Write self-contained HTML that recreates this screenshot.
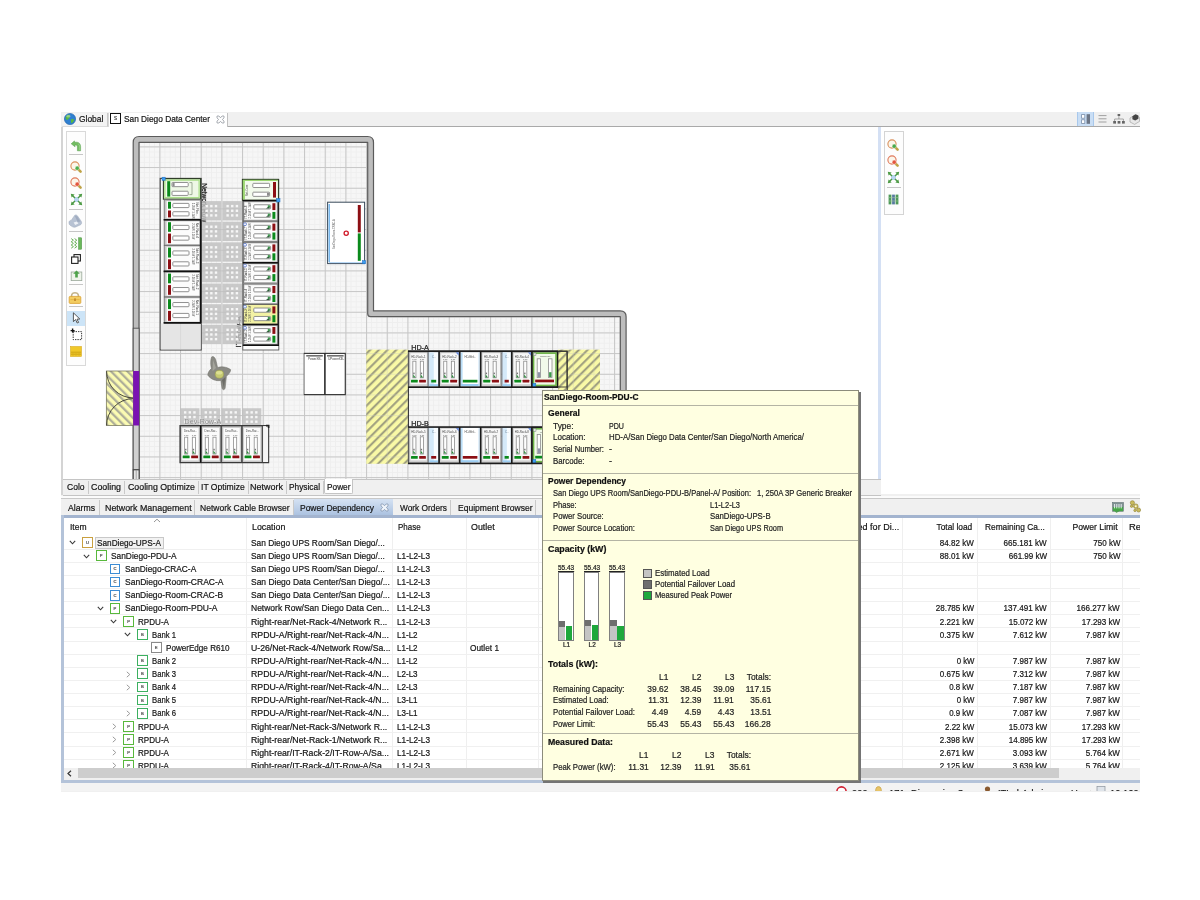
<!DOCTYPE html><html><head><meta charset="utf-8"><title>Power Dependency</title><style>html,body{margin:0;padding:0}body{width:1200px;height:900px;position:relative;overflow:hidden;background:#fff;font-family:"Liberation Sans", sans-serif;-webkit-text-stroke:0.22px;}</style></head><body><div id="root" style="position:absolute;left:0;top:0;width:1200px;height:900px;will-change:transform"><div style="position:absolute;left:61.00px;top:112.00px;width:1079.00px;height:679.50px;background:#f0f0f0;"></div><div style="position:absolute;left:61.00px;top:112.00px;width:1079.00px;height:14.50px;background:#f0f0f0;"></div><div style="position:absolute;left:228.00px;top:126.00px;width:912.00px;height:1.00px;background:#a9a9a9;"></div><div style="position:absolute;left:62.00px;top:112.50px;width:45.50px;height:14.00px;background:#f3f3f3;border-right:1px solid #c8c8c8;border-bottom:1px solid #dcdcdc;box-sizing:border-box;"></div><svg style="position:absolute;left:64px;top:112.5px" width="12" height="12" viewBox="0 0 12 12"><circle cx="6" cy="6" r="5.6" fill="#2f7fd0" stroke="#1d5fa8" stroke-width="0.6"/><path d="M2.2 3.2 C3.5 1.6 5.2 1.4 6 2.2 C6.6 3 5.4 3.6 5.6 4.6 C5.8 5.6 4.4 5.8 3.8 6.8 C3.2 7.6 2.2 6.6 1.6 5.6 C1.4 4.8 1.6 4 2.2 3.2 Z" fill="#58b840"/><path d="M7.2 6.2 C8.4 5.6 9.8 6 10.2 7 C9.8 8.6 8.6 9.8 7.4 10.2 C6.8 9.2 6.6 7.2 7.2 6.2 Z" fill="#58b840"/><ellipse cx="4.4" cy="3.2" rx="2.2" ry="1.2" fill="#fff" opacity="0.35"/></svg><span id="t0" style="position:absolute;left:79.00px;transform-origin:0 50%;top:112.86px;font-size:9.9px;line-height:12.87px;font-weight:400;color:#141414;white-space:nowrap;transform:scaleX(0.8512);">Global</span><div style="position:absolute;left:108.00px;top:112.50px;width:120.30px;height:14.50px;background:#fff;border-right:1px solid #c0c0c0;border-left:1px solid #d8d8d8;box-sizing:border-box;"></div><div style="position:absolute;left:109.80px;top:113.20px;width:11.40px;height:10.40px;border:1.4px solid #111;box-sizing:border-box;background:#fff;"></div><span id="t1" style="position:absolute;left:114.00px;transform-origin:0 50%;top:115.58px;font-size:4.5px;line-height:5.85px;font-weight:400;color:#444;white-space:nowrap;transform:scaleX(1.0000);">S</span><span id="t2" style="position:absolute;left:124.00px;transform-origin:0 50%;top:112.86px;font-size:9.9px;line-height:12.87px;font-weight:400;color:#141414;white-space:nowrap;transform:scaleX(0.8422);">San Diego Data Center</span><svg style="position:absolute;left:215.5px;top:114.8px" width="9" height="9" viewBox="0 0 9 9"><path d="M1 1 L3 1 L4.5 2.8 L6 1 L8 1 L8 3 L6.3 4.5 L8 6 L8 8 L6 8 L4.5 6.3 L3 8 L1 8 L1 6 L2.7 4.5 L1 3 Z" fill="#fdfdfd" stroke="#8a8f98" stroke-width="0.7"/></svg><div style="position:absolute;left:1077.00px;top:112.30px;width:17.00px;height:14.20px;background:#c9def5;border-left:1px solid #a8c8ec;border-right:1px solid #a8c8ec;box-sizing:border-box;"></div><svg style="position:absolute;left:1077px;top:112px" width="63" height="15" viewBox="0 0 63 15"><rect x="4.6" y="2.6" width="3.2" height="3.6" fill="#fff" stroke="#7a8ea8" stroke-width="0.8"/><rect x="4.6" y="7.8" width="3.2" height="3.6" fill="#fff" stroke="#7a8ea8" stroke-width="0.8"/><rect x="9.6" y="2.2" width="3.4" height="9.6" fill="#6c7686"/><g stroke="#a0a0a0" stroke-width="1"><path d="M21.5 3.6 H29.5 M21.5 6.8 H29.5 M21.5 10 H29.5"/></g><g fill="#666"><rect x="40.6" y="2" width="2.6" height="2"/><rect x="36.2" y="9" width="2.8" height="2.6"/><rect x="40.6" y="9" width="2.8" height="2.6"/><rect x="45" y="9" width="2.8" height="2.6"/></g><path d="M41.9 4 V7 M37.6 9 V7 H46.4 V9" stroke="#888" stroke-width="0.7" fill="none"/><path d="M53 6 L58 3 L62.5 5.4 L62.5 9.4 L57.6 12.4 L53 10 Z" fill="#e8e8e8" stroke="#999" stroke-width="0.6"/><path d="M55.4 4.2 L58.6 2.2 L61.4 3.6 L61.4 6.8 L58.2 8.6 L55.4 7.2 Z" fill="#444"/></svg><div style="position:absolute;left:61.00px;top:127.00px;width:2.00px;height:368.00px;background:#d4d4d4;"></div><div style="position:absolute;left:63.00px;top:127.00px;width:815.00px;height:352.50px;background:#fff;"></div><div style="position:absolute;left:881.00px;top:127.00px;width:259.00px;height:367.00px;background:#fff;"></div><div style="position:absolute;left:877.60px;top:127.00px;width:3.20px;height:368.00px;background:#d4e0f4;"></div><div style="position:absolute;left:866.00px;top:480.30px;width:15.00px;height:14.40px;background:linear-gradient(90deg,#f0f0f0,#e6edf8);"></div><div style="position:absolute;left:66.30px;top:130.80px;width:19.40px;height:235.40px;background:#fdfdfd;border:1px solid #d9d9d9;box-sizing:border-box;"></div><div style="position:absolute;left:69.00px;top:154.40px;width:13.60px;height:1.00px;background:#c6c6c6;"></div><div style="position:absolute;left:69.00px;top:208.60px;width:13.60px;height:1.00px;background:#c6c6c6;"></div><div style="position:absolute;left:69.00px;top:230.80px;width:13.60px;height:1.00px;background:#c6c6c6;"></div><div style="position:absolute;left:69.00px;top:283.60px;width:13.60px;height:1.00px;background:#c6c6c6;"></div><div style="position:absolute;left:69.00px;top:306.40px;width:13.60px;height:1.00px;background:#c6c6c6;"></div><svg style="position:absolute;left:70.00px;top:140.00px" width="12" height="12" viewBox="0 0 12 12"><path d="M1.2 3.8 L4.4 0.9 L4.6 2.3 C8.6 1.6 10.6 3.6 10.6 6.6 L10.6 10.8 L7.4 10.8 L7.4 7 C7.4 5.4 6.4 4.9 4.9 5.2 L5.1 6.8 Z" fill="#74bd62" stroke="#4f9a46" stroke-width="0.5"/><path d="M8.2 4 C9.6 4.6 9.8 6 9.8 10" stroke="#a6d89a" stroke-width="0.8" fill="none"/></svg><svg style="position:absolute;left:69.70px;top:161.30px" width="13" height="13" viewBox="0 0 13 13"><path d="M7.6 7.6 L10.6 10.6" stroke="#bfa347" stroke-width="2.6" stroke-linecap="round"/><circle cx="5" cy="5" r="4.1" fill="#fbf6ea" stroke="#d9905c" stroke-width="1.1"/><circle cx="7.2" cy="7.2" r="2.1" fill="#4eae4c" stroke="#fff" stroke-width="0.4"/></svg><svg style="position:absolute;left:69.70px;top:176.90px" width="13" height="13" viewBox="0 0 13 13"><path d="M7.6 7.6 L10.6 10.6" stroke="#bfa347" stroke-width="2.6" stroke-linecap="round"/><circle cx="5" cy="5" r="4.1" fill="#fbf6ea" stroke="#e07a5c" stroke-width="1.1"/><circle cx="7.2" cy="7.2" r="2.1" fill="#e4553c" stroke="#fff" stroke-width="0.4"/></svg><svg style="position:absolute;left:69.70px;top:193.30px" width="13" height="13" viewBox="0 0 13 13"><rect x="4" y="4" width="5" height="5" fill="#b8d4ee"/><g fill="#4c9a44"><path d="M0.8 0.8 L4.6 1.6 L1.6 4.6 Z"/><path d="M12.2 0.8 L8.4 1.6 L11.4 4.6 Z"/><path d="M0.8 12.2 L4.6 11.4 L1.6 8.4 Z"/><path d="M12.2 12.2 L8.4 11.4 L11.4 8.4 Z"/></g><g stroke="#4c9a44" stroke-width="1.4"><path d="M2.4 2.4 L5 5 M10.6 2.4 L8 5 M2.4 10.6 L5 8 M10.6 10.6 L8 8"/></g></svg><svg style="position:absolute;left:68.30px;top:214.20px" width="15" height="14" viewBox="0 0 15 14"><path d="M1 9 C0.6 7.4 2 6.2 3.4 6.2 L6.6 1.4 C7.6 0.6 9 1 9.6 2 L13 7 C14.2 8.6 13.6 10.6 12 11 L7.6 13 C6.4 13.4 5.2 13.2 4.2 12.6 L1.8 11 C1.2 10.4 1 9.8 1 9 Z" fill="#b7c2d3" stroke="#9aa6ba" stroke-width="0.5"/><path d="M6.8 2 L9.2 2.2 L12.4 7.4 L9.6 8 Z" fill="#9fabbf"/><path d="M5.6 8.6 L8.8 7.4 L10.4 9.6 L7.2 11 Z" fill="#eef1f6"/></svg><svg style="position:absolute;left:69.70px;top:236.50px" width="13" height="13" viewBox="0 0 13 13"><rect x="8.6" y="0.8" width="3" height="11.4" fill="#6ab85a" stroke="#3f8a36" stroke-width="0.5"/><path d="M1.2 1.6 L3.4 3.2 L1.2 4.8 L3.4 6.4 L1.2 8 L3.4 9.6 L1.2 11.2 M4.6 1.6 L6.8 3.2 L4.6 4.8 L6.8 6.4 L4.6 8 L6.8 9.6 L4.6 11.2" stroke="#5cab4c" stroke-width="0.9" fill="none"/></svg><svg style="position:absolute;left:70.20px;top:253.20px" width="12" height="12" viewBox="0 0 12 12"><rect x="4" y="1.6" width="6.4" height="6.4" fill="#fff" stroke="#222" stroke-width="1.1"/><rect x="1.6" y="4" width="6.4" height="6.4" fill="#fff" stroke="#222" stroke-width="1.1"/></svg><svg style="position:absolute;left:69.70px;top:268.50px" width="13" height="13" viewBox="0 0 13 13"><rect x="1.2" y="3" width="10.6" height="8.6" fill="#eef4ea" stroke="#9aa89a" stroke-width="0.8"/><path d="M6.5 1.6 L9.8 4.8 L7.8 4.8 L7.8 8.6 L5.2 8.6 L5.2 4.8 L3.2 4.8 Z" fill="#4ea24a"/></svg><svg style="position:absolute;left:68.40px;top:290.70px" width="14" height="13" viewBox="0 0 14 13"><path d="M3.6 6 V4.4 C3.6 0.8 10.4 0.8 10.4 4.4 V6" fill="none" stroke="#c4b48c" stroke-width="1.5"/><rect x="1.2" y="5.4" width="11.6" height="7" rx="0.9" fill="#f3cd62" stroke="#d9a030" stroke-width="0.8"/><path d="M2.4 8.6 H11.6" stroke="#e0b040" stroke-width="0.8"/><rect x="6" y="7.4" width="2" height="2.6" fill="#c89030"/></svg><div style="position:absolute;left:67.30px;top:311.00px;width:17.40px;height:14.80px;background:#cce4f7;"></div><svg style="position:absolute;left:71.40px;top:312.20px" width="10" height="12" viewBox="0 0 10 12"><path d="M2.4 0.8 L2.4 9.6 L4.6 7.6 L6.2 11 L7.6 10.4 L6 7.2 L8.8 7 Z" fill="#fff" stroke="#333" stroke-width="0.8"/></svg><svg style="position:absolute;left:69.90px;top:328.30px" width="13" height="13" viewBox="0 0 13 13"><rect x="3.2" y="3.6" width="8.4" height="8" fill="#fff" stroke="#222" stroke-width="0.9" stroke-dasharray="1.4 1"/><path d="M2.6 0.6 V4.6 M0.6 2.6 H4.6" stroke="#111" stroke-width="1.4"/></svg><svg style="position:absolute;left:70.40px;top:346.10px" width="12" height="11" viewBox="0 0 12 11"><rect x="0.6" y="0.6" width="10.8" height="9.8" fill="#f0c828" stroke="#d8a818" stroke-width="0.6"/><path d="M1 6.2 H11 M1 8.2 H11" stroke="#c89a10" stroke-width="0.8"/><path d="M3 6.4 V9.8 M6 6.4 V9.8 M9 6.4 V9.8" stroke="#d8b020" stroke-width="0.8"/></svg><div style="position:absolute;left:884.00px;top:130.70px;width:19.80px;height:84.80px;background:#fdfdfd;border:1px solid #d4d4d4;box-sizing:border-box;"></div><svg style="position:absolute;left:887.10px;top:139.10px" width="13" height="13" viewBox="0 0 13 13"><path d="M7.6 7.6 L10.6 10.6" stroke="#bfa347" stroke-width="2.6" stroke-linecap="round"/><circle cx="5" cy="5" r="4.1" fill="#fbf6ea" stroke="#d9905c" stroke-width="1.1"/><circle cx="7.2" cy="7.2" r="2.1" fill="#4aa84a" stroke="#fff" stroke-width="0.4"/></svg><svg style="position:absolute;left:887.10px;top:154.90px" width="13" height="13" viewBox="0 0 13 13"><path d="M7.6 7.6 L10.6 10.6" stroke="#bfa347" stroke-width="2.6" stroke-linecap="round"/><circle cx="5" cy="5" r="4.1" fill="#fbf6ea" stroke="#e07a5c" stroke-width="1.1"/><circle cx="7.2" cy="7.2" r="2.1" fill="#e4553c" stroke="#fff" stroke-width="0.4"/></svg><svg style="position:absolute;left:887.10px;top:170.90px" width="13" height="13" viewBox="0 0 13 13"><rect x="4" y="4" width="5" height="5" fill="#b8d4ee"/><g fill="#4c9a44"><path d="M0.8 0.8 L4.6 1.6 L1.6 4.6 Z"/><path d="M12.2 0.8 L8.4 1.6 L11.4 4.6 Z"/><path d="M0.8 12.2 L4.6 11.4 L1.6 8.4 Z"/><path d="M12.2 12.2 L8.4 11.4 L11.4 8.4 Z"/></g><g stroke="#4c9a44" stroke-width="1.4"><path d="M2.4 2.4 L5 5 M10.6 2.4 L8 5 M2.4 10.6 L5 8 M10.6 10.6 L8 8"/></g></svg><div style="position:absolute;left:886.60px;top:187.00px;width:14.00px;height:1.00px;background:#c6c6c6;"></div><svg style="position:absolute;left:888.10px;top:193.50px" width="11" height="11" viewBox="0 0 11 11"><rect x="0.6" y="0.6" width="2.8" height="9.8" fill="#4f9a58"/><rect x="4.1" y="0.6" width="2.8" height="9.8" fill="#587aa0"/><rect x="7.6" y="0.6" width="2.8" height="9.8" fill="#4f9a58"/><path d="M0.6 3.6 H10.4 M0.6 7 H10.4" stroke="#9ec8a0" stroke-width="0.6"/></svg><div style="position:absolute;left:63.00px;top:479.30px;width:818.00px;height:16.60px;background:#f0f0f0;border-top:1px solid #c4c4c4;border-bottom:1px solid #c4c4c4;box-sizing:border-box;"></div><span id="t3" style="position:absolute;left:66.70px;transform-origin:0 50%;top:480.96px;font-size:9.9px;line-height:12.87px;font-weight:400;color:#141414;white-space:nowrap;transform:scaleX(0.8665);">Colo</span><div style="position:absolute;left:87.50px;top:480.50px;width:1.00px;height:13.50px;background:#c9c9c9;"></div><span id="t4" style="position:absolute;left:90.80px;transform-origin:0 50%;top:480.96px;font-size:9.9px;line-height:12.87px;font-weight:400;color:#141414;white-space:nowrap;transform:scaleX(0.8955);">Cooling</span><div style="position:absolute;left:124.00px;top:480.50px;width:1.00px;height:13.50px;background:#c9c9c9;"></div><span id="t5" style="position:absolute;left:127.50px;transform-origin:0 50%;top:480.96px;font-size:9.9px;line-height:12.87px;font-weight:400;color:#141414;white-space:nowrap;transform:scaleX(0.8909);">Cooling Optimize</span><div style="position:absolute;left:197.50px;top:480.50px;width:1.00px;height:13.50px;background:#c9c9c9;"></div><span id="t6" style="position:absolute;left:200.50px;transform-origin:0 50%;top:480.96px;font-size:9.9px;line-height:12.87px;font-weight:400;color:#141414;white-space:nowrap;transform:scaleX(0.8686);">IT Optimize</span><div style="position:absolute;left:247.50px;top:480.50px;width:1.00px;height:13.50px;background:#c9c9c9;"></div><span id="t7" style="position:absolute;left:250.20px;transform-origin:0 50%;top:480.96px;font-size:9.9px;line-height:12.87px;font-weight:400;color:#141414;white-space:nowrap;transform:scaleX(0.9111);">Network</span><div style="position:absolute;left:286.00px;top:480.50px;width:1.00px;height:13.50px;background:#c9c9c9;"></div><span id="t8" style="position:absolute;left:289.00px;transform-origin:0 50%;top:480.96px;font-size:9.9px;line-height:12.87px;font-weight:400;color:#141414;white-space:nowrap;transform:scaleX(0.8428);">Physical</span><div style="position:absolute;left:322.50px;top:480.50px;width:1.00px;height:13.50px;background:#c9c9c9;"></div><div style="position:absolute;left:323.50px;top:479.30px;width:29.50px;height:14.90px;background:#fff;border:1px solid #c4c4c4;border-top:none;border-radius:0 0 2px 2px;box-sizing:border-box;"></div><span id="t9" style="position:absolute;left:326.50px;transform-origin:0 50%;top:480.96px;font-size:9.9px;line-height:12.87px;font-weight:400;color:#141414;white-space:nowrap;transform:scaleX(0.8393);">Power</span><div style="position:absolute;left:61.00px;top:496.00px;width:1079.00px;height:2.00px;background:#fbfbfb;"></div><div style="position:absolute;left:61.00px;top:498.00px;width:1079.00px;height:17.50px;background:#f0f0f0;border-top:1px solid #c8c8c8;box-sizing:border-box;"></div><span id="t10" style="position:absolute;left:68.00px;transform-origin:0 50%;top:501.87px;font-size:9.9px;line-height:12.87px;font-weight:400;color:#141414;white-space:nowrap;transform:scaleX(0.8785);">Alarms</span><div style="position:absolute;left:98.70px;top:499.50px;width:1.00px;height:16.00px;background:#c9c9c9;"></div><span id="t11" style="position:absolute;left:104.50px;transform-origin:0 50%;top:501.87px;font-size:9.9px;line-height:12.87px;font-weight:400;color:#141414;white-space:nowrap;transform:scaleX(0.8974);">Network Management</span><div style="position:absolute;left:193.70px;top:499.50px;width:1.00px;height:16.00px;background:#c9c9c9;"></div><span id="t12" style="position:absolute;left:199.50px;transform-origin:0 50%;top:501.87px;font-size:9.9px;line-height:12.87px;font-weight:400;color:#141414;white-space:nowrap;transform:scaleX(0.8628);">Network Cable Browser</span><div style="position:absolute;left:292.70px;top:499.50px;width:1.00px;height:16.00px;background:#c9c9c9;"></div><div style="position:absolute;left:293.70px;top:499.00px;width:99.00px;height:17.00px;background:linear-gradient(#d5e2f3,#a9c0df);"></div><span id="t13" style="position:absolute;left:299.70px;transform-origin:0 50%;top:501.87px;font-size:9.9px;line-height:12.87px;font-weight:400;color:#141414;white-space:nowrap;transform:scaleX(0.8586);">Power Dependency</span><svg style="position:absolute;left:379.6px;top:503px" width="9" height="9" viewBox="0 0 9 9"><path d="M1 1 L3 1 L4.5 2.8 L6 1 L8 1 L8 3 L6.3 4.5 L8 6 L8 8 L6 8 L4.5 6.3 L3 8 L1 8 L1 6 L2.7 4.5 L1 3 Z" fill="#eef3fa" stroke="#8193ad" stroke-width="0.7"/></svg><span id="t14" style="position:absolute;left:400.00px;transform-origin:0 50%;top:501.87px;font-size:9.9px;line-height:12.87px;font-weight:400;color:#141414;white-space:nowrap;transform:scaleX(0.8423);">Work Orders</span><div style="position:absolute;left:450.30px;top:499.50px;width:1.00px;height:16.00px;background:#c9c9c9;"></div><span id="t15" style="position:absolute;left:457.50px;transform-origin:0 50%;top:501.87px;font-size:9.9px;line-height:12.87px;font-weight:400;color:#141414;white-space:nowrap;transform:scaleX(0.8646);">Equipment Browser</span><div style="position:absolute;left:535.00px;top:499.50px;width:1.00px;height:16.00px;background:#c9c9c9;"></div><div style="position:absolute;left:61.00px;top:515.30px;width:1079.00px;height:2.70px;background:#a3b4cf;"></div><svg style="position:absolute;left:1112.30px;top:501.70px" width="12" height="11" viewBox="0 0 12 11"><rect x="0.6" y="0.6" width="10.8" height="8.6" fill="#7f9092" stroke="#5f7072" stroke-width="0.6"/><rect x="1" y="5" width="10" height="4.2" fill="#46a546"/><path d="M2.6 2 V6.4 M4.8 2 V6.4 M7 2 V6.4 M9.2 2 V6.4" stroke="#e6eeee" stroke-width="1"/><path d="M2.6 9.2 L7.6 9.2 L4.4 10.8 Z" fill="#3d9a3d"/></svg><svg style="position:absolute;left:1128.80px;top:500.30px" width="12" height="13" viewBox="0 0 12 13"><g fill="#c9bb5e" stroke="#8f8232" stroke-width="0.6"><circle cx="3.4" cy="2.8" r="2.1"/><circle cx="6.8" cy="6.2" r="2.3"/><circle cx="9.6" cy="10" r="2"/><circle cx="2.6" cy="6.2" r="1.2"/><circle cx="6" cy="10.4" r="1.2"/></g><circle cx="6.8" cy="6.2" r="0.9" fill="#fbf8e0"/></svg><svg style="position:absolute;left:63px;top:127px" width="815" height="352.3" viewBox="63 127 815 352.3" font-family="Liberation Sans, sans-serif"><defs><pattern id="gmin" x="138.7" y="125.73" width="5.1675" height="5.1675" patternUnits="userSpaceOnUse"><path d="M0.5 0 V5.168 M0 0.5 H5.168" stroke="#eeeeee" stroke-width="0.9" fill="none"/></pattern><pattern id="gmaj" x="138.7" y="125.73" width="20.67" height="20.67" patternUnits="userSpaceOnUse"><path d="M0.5 0 V20.67 M0 0.5 H20.67" stroke="#c6c6c6" stroke-width="1.1" fill="none"/></pattern><pattern id="hatchF" x="366.2" y="349.7" width="6.15" height="6.15" patternUnits="userSpaceOnUse" patternTransform="rotate(-45 366.2 349.7)"><rect width="6.15" height="6.15" fill="#f9f9a6"/><rect y="2" width="6.15" height="1.9" fill="#97977c"/></pattern><pattern id="hatchB" x="106.2" y="370.9" width="5.8" height="5.8" patternUnits="userSpaceOnUse" patternTransform="rotate(45 106.2 370.9)"><rect width="5.8" height="5.8" fill="#fbfbb2"/><rect y="1.6" width="5.8" height="2.2" fill="#acac98"/></pattern><linearGradient id="fadeD" x1="0" y1="0" x2="1" y2="0"><stop offset="0" stop-color="#222"/><stop offset="0.36" stop-color="#333"/><stop offset="0.46" stop-color="#d6d6d6"/><stop offset="1" stop-color="#e2e2e2"/></linearGradient><linearGradient id="fadeU" x1="0" y1="0" x2="1" y2="0"><stop offset="0" stop-color="#333"/><stop offset="0.22" stop-color="#444"/><stop offset="0.3" stop-color="#dadada"/><stop offset="1" stop-color="#e4e4e4"/></linearGradient></defs><path d="M139.2 142.4 H367.5 V316.8 H620 V480 H139.2 Z" fill="#f6f6f6"/><path d="M139.2 142.4 H367.5 V316.8 H620 V480 H139.2 Z" fill="url(#gmin)"/><path d="M139.2 142.4 H367.5 V316.8 H620 V480 H139.2 Z" fill="url(#gmaj)"/><path d="M136.1 481 V142.4 Q136.1 139.4 139.1 139.4 H367.6 Q370.6 139.4 370.6 142.4 V313.8 H620.2 Q623.2 313.8 623.2 316.8 V481" fill="none" stroke="#5a5a5a" stroke-width="7" stroke-linejoin="round"/><path d="M136.1 481 V142.4 Q136.1 139.4 139.1 139.4 H367.6 Q370.6 139.4 370.6 142.4 V313.8 H620.2 Q623.2 313.8 623.2 316.8 V481" fill="none" stroke="#bdbdbd" stroke-width="4.6" stroke-linejoin="round"/><rect x="133.2" y="328.2" width="5.9" height="141.6" fill="#d0d0d0" stroke="#4e4e4e" stroke-width="0.9"/><rect x="133.2" y="469.8" width="5.9" height="12" fill="#e6e6e6" stroke="#3a3a3a" stroke-width="1"/><path d="M136.2 470 V481" stroke="#8a8a8a" stroke-width="0.7"/><rect x="106.3" y="371" width="27" height="54.5" fill="url(#hatchB)" stroke="#6c6c50" stroke-width="0.7"/><path d="M106.6 371.3 A26.6 26.6 0 0 0 133.2 397.9 M133.2 398.6 A26.9 26.9 0 0 0 106.6 425.3" fill="none" stroke="#3a3a30" stroke-width="0.9"/><rect x="133.2" y="371" width="5.9" height="54.5" fill="#7a12b2"/><rect x="366" y="349.6" width="42.2" height="114.2" fill="url(#hatchF)"/><rect x="558" y="349.6" width="42" height="114.2" fill="url(#hatchF)"/><rect x="366" y="349.6" width="42.2" height="114.2" fill="url(#gmaj)" opacity="0.35"/><rect x="558" y="349.6" width="42" height="114.2" fill="url(#gmaj)" opacity="0.35"/><text x="0" y="0" font-size="7.6" fill="#1c1c1c" stroke="#1c1c1c" stroke-width="0.3" transform="translate(201.8 183.2) rotate(90)" textLength="39" lengthAdjust="spacingAndGlyphs">Network Row</text><text x="0" y="0" font-size="7.6" fill="#1c1c1c" stroke="#1c1c1c" stroke-width="0.3" transform="translate(240.8 347.4) rotate(-90)" textLength="31" lengthAdjust="spacingAndGlyphs">IT-Row-A</text><rect x="201.60" y="201.10" width="19.50" height="19.32" fill="#c0c0c0" fill-opacity="0.84"/><rect x="205.50" y="204.91" width="2.4" height="2.4" fill="#f6f6f6"/><rect x="205.50" y="209.56" width="2.4" height="2.4" fill="#f6f6f6"/><rect x="205.50" y="214.21" width="2.4" height="2.4" fill="#f6f6f6"/><rect x="210.15" y="204.91" width="2.4" height="2.4" fill="#f6f6f6"/><rect x="210.15" y="209.56" width="2.4" height="2.4" fill="#f6f6f6"/><rect x="210.15" y="214.21" width="2.4" height="2.4" fill="#f6f6f6"/><rect x="214.80" y="204.91" width="2.4" height="2.4" fill="#f6f6f6"/><rect x="214.80" y="209.56" width="2.4" height="2.4" fill="#f6f6f6"/><rect x="214.80" y="214.21" width="2.4" height="2.4" fill="#f6f6f6"/><rect x="222.50" y="201.10" width="19.50" height="19.32" fill="#c0c0c0" fill-opacity="0.84"/><rect x="226.40" y="204.91" width="2.4" height="2.4" fill="#f6f6f6"/><rect x="226.40" y="209.56" width="2.4" height="2.4" fill="#f6f6f6"/><rect x="226.40" y="214.21" width="2.4" height="2.4" fill="#f6f6f6"/><rect x="231.05" y="204.91" width="2.4" height="2.4" fill="#f6f6f6"/><rect x="231.05" y="209.56" width="2.4" height="2.4" fill="#f6f6f6"/><rect x="231.05" y="214.21" width="2.4" height="2.4" fill="#f6f6f6"/><rect x="235.70" y="204.91" width="2.4" height="2.4" fill="#f6f6f6"/><rect x="235.70" y="209.56" width="2.4" height="2.4" fill="#f6f6f6"/><rect x="235.70" y="214.21" width="2.4" height="2.4" fill="#f6f6f6"/><rect x="201.60" y="221.72" width="19.50" height="19.32" fill="#c0c0c0" fill-opacity="0.84"/><rect x="205.50" y="225.53" width="2.4" height="2.4" fill="#f6f6f6"/><rect x="205.50" y="230.18" width="2.4" height="2.4" fill="#f6f6f6"/><rect x="205.50" y="234.83" width="2.4" height="2.4" fill="#f6f6f6"/><rect x="210.15" y="225.53" width="2.4" height="2.4" fill="#f6f6f6"/><rect x="210.15" y="230.18" width="2.4" height="2.4" fill="#f6f6f6"/><rect x="210.15" y="234.83" width="2.4" height="2.4" fill="#f6f6f6"/><rect x="214.80" y="225.53" width="2.4" height="2.4" fill="#f6f6f6"/><rect x="214.80" y="230.18" width="2.4" height="2.4" fill="#f6f6f6"/><rect x="214.80" y="234.83" width="2.4" height="2.4" fill="#f6f6f6"/><rect x="222.50" y="221.72" width="19.50" height="19.32" fill="#c0c0c0" fill-opacity="0.84"/><rect x="226.40" y="225.53" width="2.4" height="2.4" fill="#f6f6f6"/><rect x="226.40" y="230.18" width="2.4" height="2.4" fill="#f6f6f6"/><rect x="226.40" y="234.83" width="2.4" height="2.4" fill="#f6f6f6"/><rect x="231.05" y="225.53" width="2.4" height="2.4" fill="#f6f6f6"/><rect x="231.05" y="230.18" width="2.4" height="2.4" fill="#f6f6f6"/><rect x="231.05" y="234.83" width="2.4" height="2.4" fill="#f6f6f6"/><rect x="235.70" y="225.53" width="2.4" height="2.4" fill="#f6f6f6"/><rect x="235.70" y="230.18" width="2.4" height="2.4" fill="#f6f6f6"/><rect x="235.70" y="234.83" width="2.4" height="2.4" fill="#f6f6f6"/><rect x="201.60" y="242.34" width="19.50" height="19.32" fill="#c0c0c0" fill-opacity="0.84"/><rect x="205.50" y="246.15" width="2.4" height="2.4" fill="#f6f6f6"/><rect x="205.50" y="250.80" width="2.4" height="2.4" fill="#f6f6f6"/><rect x="205.50" y="255.45" width="2.4" height="2.4" fill="#f6f6f6"/><rect x="210.15" y="246.15" width="2.4" height="2.4" fill="#f6f6f6"/><rect x="210.15" y="250.80" width="2.4" height="2.4" fill="#f6f6f6"/><rect x="210.15" y="255.45" width="2.4" height="2.4" fill="#f6f6f6"/><rect x="214.80" y="246.15" width="2.4" height="2.4" fill="#f6f6f6"/><rect x="214.80" y="250.80" width="2.4" height="2.4" fill="#f6f6f6"/><rect x="214.80" y="255.45" width="2.4" height="2.4" fill="#f6f6f6"/><rect x="222.50" y="242.34" width="19.50" height="19.32" fill="#c0c0c0" fill-opacity="0.84"/><rect x="226.40" y="246.15" width="2.4" height="2.4" fill="#f6f6f6"/><rect x="226.40" y="250.80" width="2.4" height="2.4" fill="#f6f6f6"/><rect x="226.40" y="255.45" width="2.4" height="2.4" fill="#f6f6f6"/><rect x="231.05" y="246.15" width="2.4" height="2.4" fill="#f6f6f6"/><rect x="231.05" y="250.80" width="2.4" height="2.4" fill="#f6f6f6"/><rect x="231.05" y="255.45" width="2.4" height="2.4" fill="#f6f6f6"/><rect x="235.70" y="246.15" width="2.4" height="2.4" fill="#f6f6f6"/><rect x="235.70" y="250.80" width="2.4" height="2.4" fill="#f6f6f6"/><rect x="235.70" y="255.45" width="2.4" height="2.4" fill="#f6f6f6"/><rect x="201.60" y="262.96" width="19.50" height="19.32" fill="#c0c0c0" fill-opacity="0.84"/><rect x="205.50" y="266.77" width="2.4" height="2.4" fill="#f6f6f6"/><rect x="205.50" y="271.42" width="2.4" height="2.4" fill="#f6f6f6"/><rect x="205.50" y="276.07" width="2.4" height="2.4" fill="#f6f6f6"/><rect x="210.15" y="266.77" width="2.4" height="2.4" fill="#f6f6f6"/><rect x="210.15" y="271.42" width="2.4" height="2.4" fill="#f6f6f6"/><rect x="210.15" y="276.07" width="2.4" height="2.4" fill="#f6f6f6"/><rect x="214.80" y="266.77" width="2.4" height="2.4" fill="#f6f6f6"/><rect x="214.80" y="271.42" width="2.4" height="2.4" fill="#f6f6f6"/><rect x="214.80" y="276.07" width="2.4" height="2.4" fill="#f6f6f6"/><rect x="222.50" y="262.96" width="19.50" height="19.32" fill="#c0c0c0" fill-opacity="0.84"/><rect x="226.40" y="266.77" width="2.4" height="2.4" fill="#f6f6f6"/><rect x="226.40" y="271.42" width="2.4" height="2.4" fill="#f6f6f6"/><rect x="226.40" y="276.07" width="2.4" height="2.4" fill="#f6f6f6"/><rect x="231.05" y="266.77" width="2.4" height="2.4" fill="#f6f6f6"/><rect x="231.05" y="271.42" width="2.4" height="2.4" fill="#f6f6f6"/><rect x="231.05" y="276.07" width="2.4" height="2.4" fill="#f6f6f6"/><rect x="235.70" y="266.77" width="2.4" height="2.4" fill="#f6f6f6"/><rect x="235.70" y="271.42" width="2.4" height="2.4" fill="#f6f6f6"/><rect x="235.70" y="276.07" width="2.4" height="2.4" fill="#f6f6f6"/><rect x="201.60" y="283.58" width="19.50" height="19.32" fill="#c0c0c0" fill-opacity="0.84"/><rect x="205.50" y="287.39" width="2.4" height="2.4" fill="#f6f6f6"/><rect x="205.50" y="292.04" width="2.4" height="2.4" fill="#f6f6f6"/><rect x="205.50" y="296.69" width="2.4" height="2.4" fill="#f6f6f6"/><rect x="210.15" y="287.39" width="2.4" height="2.4" fill="#f6f6f6"/><rect x="210.15" y="292.04" width="2.4" height="2.4" fill="#f6f6f6"/><rect x="210.15" y="296.69" width="2.4" height="2.4" fill="#f6f6f6"/><rect x="214.80" y="287.39" width="2.4" height="2.4" fill="#f6f6f6"/><rect x="214.80" y="292.04" width="2.4" height="2.4" fill="#f6f6f6"/><rect x="214.80" y="296.69" width="2.4" height="2.4" fill="#f6f6f6"/><rect x="222.50" y="283.58" width="19.50" height="19.32" fill="#c0c0c0" fill-opacity="0.84"/><rect x="226.40" y="287.39" width="2.4" height="2.4" fill="#f6f6f6"/><rect x="226.40" y="292.04" width="2.4" height="2.4" fill="#f6f6f6"/><rect x="226.40" y="296.69" width="2.4" height="2.4" fill="#f6f6f6"/><rect x="231.05" y="287.39" width="2.4" height="2.4" fill="#f6f6f6"/><rect x="231.05" y="292.04" width="2.4" height="2.4" fill="#f6f6f6"/><rect x="231.05" y="296.69" width="2.4" height="2.4" fill="#f6f6f6"/><rect x="235.70" y="287.39" width="2.4" height="2.4" fill="#f6f6f6"/><rect x="235.70" y="292.04" width="2.4" height="2.4" fill="#f6f6f6"/><rect x="235.70" y="296.69" width="2.4" height="2.4" fill="#f6f6f6"/><rect x="201.60" y="304.20" width="19.50" height="19.32" fill="#c0c0c0" fill-opacity="0.84"/><rect x="205.50" y="308.01" width="2.4" height="2.4" fill="#f6f6f6"/><rect x="205.50" y="312.66" width="2.4" height="2.4" fill="#f6f6f6"/><rect x="205.50" y="317.31" width="2.4" height="2.4" fill="#f6f6f6"/><rect x="210.15" y="308.01" width="2.4" height="2.4" fill="#f6f6f6"/><rect x="210.15" y="312.66" width="2.4" height="2.4" fill="#f6f6f6"/><rect x="210.15" y="317.31" width="2.4" height="2.4" fill="#f6f6f6"/><rect x="214.80" y="308.01" width="2.4" height="2.4" fill="#f6f6f6"/><rect x="214.80" y="312.66" width="2.4" height="2.4" fill="#f6f6f6"/><rect x="214.80" y="317.31" width="2.4" height="2.4" fill="#f6f6f6"/><rect x="222.50" y="304.20" width="19.50" height="19.32" fill="#c0c0c0" fill-opacity="0.84"/><rect x="226.40" y="308.01" width="2.4" height="2.4" fill="#f6f6f6"/><rect x="226.40" y="312.66" width="2.4" height="2.4" fill="#f6f6f6"/><rect x="226.40" y="317.31" width="2.4" height="2.4" fill="#f6f6f6"/><rect x="231.05" y="308.01" width="2.4" height="2.4" fill="#f6f6f6"/><rect x="231.05" y="312.66" width="2.4" height="2.4" fill="#f6f6f6"/><rect x="231.05" y="317.31" width="2.4" height="2.4" fill="#f6f6f6"/><rect x="235.70" y="308.01" width="2.4" height="2.4" fill="#f6f6f6"/><rect x="235.70" y="312.66" width="2.4" height="2.4" fill="#f6f6f6"/><rect x="235.70" y="317.31" width="2.4" height="2.4" fill="#f6f6f6"/><rect x="201.60" y="324.82" width="19.50" height="19.32" fill="#c0c0c0" fill-opacity="0.84"/><rect x="205.50" y="328.63" width="2.4" height="2.4" fill="#f6f6f6"/><rect x="205.50" y="333.28" width="2.4" height="2.4" fill="#f6f6f6"/><rect x="205.50" y="337.93" width="2.4" height="2.4" fill="#f6f6f6"/><rect x="210.15" y="328.63" width="2.4" height="2.4" fill="#f6f6f6"/><rect x="210.15" y="333.28" width="2.4" height="2.4" fill="#f6f6f6"/><rect x="210.15" y="337.93" width="2.4" height="2.4" fill="#f6f6f6"/><rect x="214.80" y="328.63" width="2.4" height="2.4" fill="#f6f6f6"/><rect x="214.80" y="333.28" width="2.4" height="2.4" fill="#f6f6f6"/><rect x="214.80" y="337.93" width="2.4" height="2.4" fill="#f6f6f6"/><rect x="222.50" y="324.82" width="19.50" height="19.32" fill="#c0c0c0" fill-opacity="0.84"/><rect x="226.40" y="328.63" width="2.4" height="2.4" fill="#f6f6f6"/><rect x="226.40" y="333.28" width="2.4" height="2.4" fill="#f6f6f6"/><rect x="226.40" y="337.93" width="2.4" height="2.4" fill="#f6f6f6"/><rect x="231.05" y="328.63" width="2.4" height="2.4" fill="#f6f6f6"/><rect x="231.05" y="333.28" width="2.4" height="2.4" fill="#f6f6f6"/><rect x="231.05" y="337.93" width="2.4" height="2.4" fill="#f6f6f6"/><rect x="235.70" y="328.63" width="2.4" height="2.4" fill="#f6f6f6"/><rect x="235.70" y="333.28" width="2.4" height="2.4" fill="#f6f6f6"/><rect x="235.70" y="337.93" width="2.4" height="2.4" fill="#f6f6f6"/><clipPath id="devclip"><rect x="180" y="408.3" width="84" height="17.2"/></clipPath><g clip-path="url(#devclip)"><rect x="180.20" y="407.40" width="19.22" height="19.32" fill="#c0c0c0" fill-opacity="0.84"/><rect x="183.96" y="411.21" width="2.4" height="2.4" fill="#f6f6f6"/><rect x="183.96" y="415.86" width="2.4" height="2.4" fill="#f6f6f6"/><rect x="183.96" y="420.51" width="2.4" height="2.4" fill="#f6f6f6"/><rect x="188.61" y="411.21" width="2.4" height="2.4" fill="#f6f6f6"/><rect x="188.61" y="415.86" width="2.4" height="2.4" fill="#f6f6f6"/><rect x="188.61" y="420.51" width="2.4" height="2.4" fill="#f6f6f6"/><rect x="193.26" y="411.21" width="2.4" height="2.4" fill="#f6f6f6"/><rect x="193.26" y="415.86" width="2.4" height="2.4" fill="#f6f6f6"/><rect x="193.26" y="420.51" width="2.4" height="2.4" fill="#f6f6f6"/><rect x="200.82" y="407.40" width="19.22" height="19.32" fill="#c0c0c0" fill-opacity="0.84"/><rect x="204.58" y="411.21" width="2.4" height="2.4" fill="#f6f6f6"/><rect x="204.58" y="415.86" width="2.4" height="2.4" fill="#f6f6f6"/><rect x="204.58" y="420.51" width="2.4" height="2.4" fill="#f6f6f6"/><rect x="209.23" y="411.21" width="2.4" height="2.4" fill="#f6f6f6"/><rect x="209.23" y="415.86" width="2.4" height="2.4" fill="#f6f6f6"/><rect x="209.23" y="420.51" width="2.4" height="2.4" fill="#f6f6f6"/><rect x="213.88" y="411.21" width="2.4" height="2.4" fill="#f6f6f6"/><rect x="213.88" y="415.86" width="2.4" height="2.4" fill="#f6f6f6"/><rect x="213.88" y="420.51" width="2.4" height="2.4" fill="#f6f6f6"/><rect x="221.44" y="407.40" width="19.22" height="19.32" fill="#c0c0c0" fill-opacity="0.84"/><rect x="225.20" y="411.21" width="2.4" height="2.4" fill="#f6f6f6"/><rect x="225.20" y="415.86" width="2.4" height="2.4" fill="#f6f6f6"/><rect x="225.20" y="420.51" width="2.4" height="2.4" fill="#f6f6f6"/><rect x="229.85" y="411.21" width="2.4" height="2.4" fill="#f6f6f6"/><rect x="229.85" y="415.86" width="2.4" height="2.4" fill="#f6f6f6"/><rect x="229.85" y="420.51" width="2.4" height="2.4" fill="#f6f6f6"/><rect x="234.50" y="411.21" width="2.4" height="2.4" fill="#f6f6f6"/><rect x="234.50" y="415.86" width="2.4" height="2.4" fill="#f6f6f6"/><rect x="234.50" y="420.51" width="2.4" height="2.4" fill="#f6f6f6"/><rect x="242.06" y="407.40" width="19.22" height="19.32" fill="#c0c0c0" fill-opacity="0.84"/><rect x="245.82" y="411.21" width="2.4" height="2.4" fill="#f6f6f6"/><rect x="245.82" y="415.86" width="2.4" height="2.4" fill="#f6f6f6"/><rect x="245.82" y="420.51" width="2.4" height="2.4" fill="#f6f6f6"/><rect x="250.47" y="411.21" width="2.4" height="2.4" fill="#f6f6f6"/><rect x="250.47" y="415.86" width="2.4" height="2.4" fill="#f6f6f6"/><rect x="250.47" y="420.51" width="2.4" height="2.4" fill="#f6f6f6"/><rect x="255.12" y="411.21" width="2.4" height="2.4" fill="#f6f6f6"/><rect x="255.12" y="415.86" width="2.4" height="2.4" fill="#f6f6f6"/><rect x="255.12" y="420.51" width="2.4" height="2.4" fill="#f6f6f6"/></g><rect x="160.2" y="178.4" width="41" height="171.6" fill="#f7f7f7" stroke="#444" stroke-width="1.1"/><rect x="160.8" y="323.4" width="39.8" height="26" fill="#e5e5e5"/><path d="M180.6 323.4 V349" stroke="#d4d4d4" stroke-width="0.8"/><rect x="163.40" y="178.60" width="37.20" height="20.60" fill="#cdeab8" stroke="#2c3a26" stroke-width="1.1"/><rect x="165.00" y="180.20" width="34.00" height="17.40" fill="#eef8e6" stroke="#a6dc84" stroke-width="1"/><rect x="167.20" y="181.20" width="3" height="15.40" fill="#0b8a1c"/><rect x="172.00" y="182.47" width="16.20" height="4.2" rx="0.8" fill="#fff" stroke="#858585" stroke-width="0.9"/><rect x="172.50" y="183.07" width="2.1" height="3.00" fill="#8c8c8c"/><rect x="172.00" y="191.23" width="16.20" height="4.2" rx="0.8" fill="#fff" stroke="#858585" stroke-width="0.9"/><path d="M189.40 182.60 H192.00 V194.60 H189.40" fill="none" stroke="#8a9a84" stroke-width="0.8"/><rect x="164.20" y="199.80" width="36.40" height="19.60" fill="#c9c9c9" stroke="#6a6a6a" stroke-width="0.8"/><rect x="166.60" y="201.00" width="33.00" height="17.20" fill="#fcfcfc"/><rect x="168.00" y="201.80" width="3" height="6.90" fill="#0b8a1c"/><rect x="168.00" y="210.50" width="3" height="6.90" fill="#8c0f14"/><rect x="172.80" y="203.38" width="16.20" height="4.2" rx="0.8" fill="#fff" stroke="#858585" stroke-width="0.9"/><rect x="172.80" y="211.71" width="16.20" height="4.2" rx="0.8" fill="#fff" stroke="#858585" stroke-width="0.9"/><text x="195.60" y="202.40" font-size="3" fill="#2c2c2c" text-anchor="start" transform="rotate(90 195.60 202.40)">Net-Fibe..</text><text x="191.60" y="202.80" font-size="2.7" fill="#444" text-anchor="start" transform="rotate(90 191.60 202.80)">2.2kW 1.1kW</text><rect x="164.20" y="220.20" width="36.40" height="25.00" fill="#c9c9c9" stroke="#6a6a6a" stroke-width="0.8"/><rect x="166.60" y="221.40" width="33.00" height="22.60" fill="#fcfcfc"/><rect x="168.00" y="222.20" width="3" height="9.60" fill="#0b8a1c"/><rect x="168.00" y="233.60" width="3" height="9.60" fill="#8c0f14"/><rect x="172.80" y="225.35" width="16.20" height="4.2" rx="0.8" fill="#fff" stroke="#858585" stroke-width="0.9"/><rect x="172.80" y="235.97" width="16.20" height="4.2" rx="0.8" fill="#fff" stroke="#858585" stroke-width="0.9"/><text x="195.60" y="222.80" font-size="3" fill="#2c2c2c" text-anchor="start" transform="rotate(90 195.60 222.80)">Net-Rack-4</text><text x="191.60" y="223.20" font-size="2.7" fill="#444" text-anchor="start" transform="rotate(90 191.60 223.20)">2.2kW 1.1kW</text><rect x="164.20" y="245.60" width="36.40" height="25.60" fill="#c9c9c9" stroke="#6a6a6a" stroke-width="0.8"/><rect x="166.60" y="246.80" width="33.00" height="23.20" fill="#fcfcfc"/><rect x="168.00" y="247.60" width="3" height="9.90" fill="#0b8a1c"/><rect x="168.00" y="259.30" width="3" height="9.90" fill="#8c0f14"/><rect x="172.80" y="250.92" width="16.20" height="4.2" rx="0.8" fill="#fff" stroke="#858585" stroke-width="0.9"/><rect x="172.80" y="261.80" width="16.20" height="4.2" rx="0.8" fill="#fff" stroke="#858585" stroke-width="0.9"/><text x="195.60" y="248.20" font-size="3" fill="#2c2c2c" text-anchor="start" transform="rotate(90 195.60 248.20)">Net-Rack-3</text><text x="191.60" y="248.60" font-size="2.7" fill="#444" text-anchor="start" transform="rotate(90 191.60 248.60)">2.2kW 1.1kW</text><rect x="164.20" y="271.60" width="36.40" height="25.20" fill="#c9c9c9" stroke="#6a6a6a" stroke-width="0.8"/><rect x="166.60" y="272.80" width="33.00" height="22.80" fill="#fcfcfc"/><rect x="168.00" y="273.60" width="3" height="9.70" fill="#0b8a1c"/><rect x="168.00" y="285.10" width="3" height="9.70" fill="#8c0f14"/><rect x="172.80" y="276.81" width="16.20" height="4.2" rx="0.8" fill="#fff" stroke="#858585" stroke-width="0.9"/><rect x="172.80" y="287.52" width="16.20" height="4.2" rx="0.8" fill="#fff" stroke="#858585" stroke-width="0.9"/><text x="195.60" y="274.20" font-size="3" fill="#2c2c2c" text-anchor="start" transform="rotate(90 195.60 274.20)">Net-Rack-2</text><text x="191.60" y="274.60" font-size="2.7" fill="#444" text-anchor="start" transform="rotate(90 191.60 274.60)">2.2kW 1.1kW</text><rect x="164.20" y="297.20" width="36.40" height="25.60" fill="#c9c9c9" stroke="#6a6a6a" stroke-width="0.8"/><rect x="166.60" y="298.40" width="33.00" height="23.20" fill="#fcfcfc"/><rect x="168.00" y="299.20" width="3" height="9.90" fill="#0b8a1c"/><rect x="168.00" y="310.90" width="3" height="9.90" fill="#8c0f14"/><rect x="172.80" y="302.52" width="16.20" height="4.2" rx="0.8" fill="#fff" stroke="#858585" stroke-width="0.9"/><rect x="172.80" y="313.40" width="16.20" height="4.2" rx="0.8" fill="#fff" stroke="#858585" stroke-width="0.9"/><text x="195.60" y="299.80" font-size="3" fill="#2c2c2c" text-anchor="start" transform="rotate(90 195.60 299.80)">Net-Rack-1</text><text x="191.60" y="300.20" font-size="2.7" fill="#444" text-anchor="start" transform="rotate(90 191.60 300.20)">2.2kW 1.1kW</text><path d="M163.6 219.8 H201 M163.6 271.4 H201 M163.6 322.9 H201 M200.6 219.8 V322.9" stroke="#111" stroke-width="1.6" fill="none"/><rect x="162" y="177.2" width="3.2" height="3.2" fill="#3c9cf0" stroke="#1c6cc0" stroke-width="0.5"/><rect x="242.8" y="179.4" width="36" height="170.6" fill="#fdfdfd" stroke="#5a5a5a" stroke-width="0.9"/><rect x="242.40" y="179.40" width="36.00" height="20.80" fill="#cdeab8" stroke="#2c3a26" stroke-width="1.1"/><rect x="243.00" y="180.00" width="34.80" height="19.60" fill="#f2faec"/><path d="M243.80 180.00 V199.60" stroke="#9bd671" stroke-width="2.2"/><path d="M243.00 180.40 H277.80" stroke="#9bd671" stroke-width="1.2"/><rect x="273.00" y="182.00" width="3" height="15.60" fill="#8c0f14"/><rect x="252.80" y="183.33" width="16.80" height="4.2" rx="0.8" fill="#fff" stroke="#858585" stroke-width="0.9"/><rect x="252.80" y="192.17" width="16.80" height="4.2" rx="0.8" fill="#fff" stroke="#858585" stroke-width="0.9"/><rect x="267.00" y="192.77" width="2.1" height="3.00" fill="#8c8c8c"/><text x="248.00" y="196.20" font-size="2.9" fill="#555" text-anchor="start" transform="rotate(-90 248.00 196.20)">Net-Core</text><rect x="243.40" y="201.20" width="34.40" height="19.60" fill="#c9c9c9" stroke="#6a6a6a" stroke-width="0.8"/><rect x="244.60" y="202.40" width="32.00" height="17.20" fill="#fcfcfc"/><rect x="272.40" y="203.20" width="3" height="6.90" fill="#8c0f14"/><rect x="272.40" y="211.90" width="3" height="6.90" fill="#0b8a1c"/><rect x="253.80" y="204.78" width="16.80" height="4.2" rx="0.8" fill="#fff" stroke="#858585" stroke-width="0.9"/><path d="M266.00 208.48 L269.70 205.48 L269.70 208.48 Z" fill="#2f5a3a"/><rect x="267.80" y="205.28" width="2" height="1.8" fill="#3a9a4a"/><rect x="253.80" y="213.11" width="16.80" height="4.2" rx="0.8" fill="#fff" stroke="#858585" stroke-width="0.9"/><path d="M266.00 216.81 L269.70 213.81 L269.70 216.81 Z" fill="#2f5a3a"/><rect x="267.80" y="213.61" width="2" height="1.8" fill="#3a9a4a"/><text x="246.80" y="218.60" font-size="3" fill="#2c2c2c" text-anchor="start" transform="rotate(-90 246.80 218.60)">IT-Rack-8</text><text x="250.60" y="218.40" font-size="2.7" fill="#444" text-anchor="start" transform="rotate(-90 250.60 218.40)">2.2kW 1.1kW</text><rect x="243.40" y="221.60" width="34.40" height="20.00" fill="#c9c9c9" stroke="#6a6a6a" stroke-width="0.8"/><rect x="244.60" y="222.80" width="32.00" height="17.60" fill="#fcfcfc"/><rect x="272.40" y="223.60" width="3" height="7.10" fill="#8c0f14"/><rect x="272.40" y="232.50" width="3" height="7.10" fill="#0b8a1c"/><rect x="253.80" y="225.30" width="16.80" height="4.2" rx="0.8" fill="#fff" stroke="#858585" stroke-width="0.9"/><path d="M266.00 229.00 L269.70 226.00 L269.70 229.00 Z" fill="#2f5a3a"/><rect x="267.80" y="225.80" width="2" height="1.8" fill="#3a9a4a"/><rect x="253.80" y="233.80" width="16.80" height="4.2" rx="0.8" fill="#fff" stroke="#858585" stroke-width="0.9"/><path d="M266.00 237.50 L269.70 234.50 L269.70 237.50 Z" fill="#2f5a3a"/><rect x="267.80" y="234.30" width="2" height="1.8" fill="#3a9a4a"/><text x="246.80" y="239.40" font-size="3" fill="#2c2c2c" text-anchor="start" transform="rotate(-90 246.80 239.40)">IT-Rack-7</text><text x="250.60" y="239.20" font-size="2.7" fill="#444" text-anchor="start" transform="rotate(-90 250.60 239.20)">2.2kW 1.1kW</text><rect x="243.40" y="242.40" width="34.40" height="20.00" fill="#c9c9c9" stroke="#6a6a6a" stroke-width="0.8"/><rect x="244.60" y="243.60" width="32.00" height="17.60" fill="#fcfcfc"/><rect x="272.40" y="244.40" width="3" height="7.10" fill="#8c0f14"/><rect x="272.40" y="253.30" width="3" height="7.10" fill="#0b8a1c"/><rect x="253.80" y="246.10" width="16.80" height="4.2" rx="0.8" fill="#fff" stroke="#858585" stroke-width="0.9"/><path d="M266.00 249.80 L269.70 246.80 L269.70 249.80 Z" fill="#2f5a3a"/><rect x="267.80" y="246.60" width="2" height="1.8" fill="#3a9a4a"/><rect x="253.80" y="254.60" width="16.80" height="4.2" rx="0.8" fill="#fff" stroke="#858585" stroke-width="0.9"/><path d="M266.00 258.30 L269.70 255.30 L269.70 258.30 Z" fill="#2f5a3a"/><rect x="267.80" y="255.10" width="2" height="1.8" fill="#3a9a4a"/><text x="246.80" y="260.20" font-size="3" fill="#2c2c2c" text-anchor="start" transform="rotate(-90 246.80 260.20)">IT-Rack-6</text><text x="250.60" y="260.00" font-size="2.7" fill="#444" text-anchor="start" transform="rotate(-90 250.60 260.00)">2.2kW 1.1kW</text><rect x="243.40" y="263.20" width="34.40" height="20.00" fill="#c9c9c9" stroke="#6a6a6a" stroke-width="0.8"/><rect x="244.60" y="264.40" width="32.00" height="17.60" fill="#fcfcfc"/><rect x="272.40" y="265.20" width="3" height="7.10" fill="#8c0f14"/><rect x="272.40" y="274.10" width="3" height="7.10" fill="#0b8a1c"/><rect x="253.80" y="266.90" width="16.80" height="4.2" rx="0.8" fill="#fff" stroke="#858585" stroke-width="0.9"/><path d="M266.00 270.60 L269.70 267.60 L269.70 270.60 Z" fill="#2f5a3a"/><rect x="267.80" y="267.40" width="2" height="1.8" fill="#3a9a4a"/><rect x="253.80" y="275.40" width="16.80" height="4.2" rx="0.8" fill="#fff" stroke="#858585" stroke-width="0.9"/><path d="M266.00 279.10 L269.70 276.10 L269.70 279.10 Z" fill="#2f5a3a"/><rect x="267.80" y="275.90" width="2" height="1.8" fill="#3a9a4a"/><text x="246.80" y="281.00" font-size="3" fill="#2c2c2c" text-anchor="start" transform="rotate(-90 246.80 281.00)">IT-Rack-5</text><text x="250.60" y="280.80" font-size="2.7" fill="#444" text-anchor="start" transform="rotate(-90 250.60 280.80)">2.2kW 1.1kW</text><rect x="243.40" y="284.00" width="34.40" height="20.00" fill="#c9c9c9" stroke="#6a6a6a" stroke-width="0.8"/><rect x="244.60" y="285.20" width="32.00" height="17.60" fill="#fcfcfc"/><rect x="272.40" y="286.00" width="3" height="7.10" fill="#8c0f14"/><rect x="272.40" y="294.90" width="3" height="7.10" fill="#0b8a1c"/><rect x="253.80" y="287.70" width="16.80" height="4.2" rx="0.8" fill="#fff" stroke="#858585" stroke-width="0.9"/><path d="M266.00 291.40 L269.70 288.40 L269.70 291.40 Z" fill="#2f5a3a"/><rect x="267.80" y="288.20" width="2" height="1.8" fill="#3a9a4a"/><rect x="253.80" y="296.20" width="16.80" height="4.2" rx="0.8" fill="#fff" stroke="#858585" stroke-width="0.9"/><path d="M266.00 299.90 L269.70 296.90 L269.70 299.90 Z" fill="#2f5a3a"/><rect x="267.80" y="296.70" width="2" height="1.8" fill="#3a9a4a"/><text x="246.80" y="301.80" font-size="3" fill="#2c2c2c" text-anchor="start" transform="rotate(-90 246.80 301.80)">IT-Rack-4</text><text x="250.60" y="301.60" font-size="2.7" fill="#444" text-anchor="start" transform="rotate(-90 250.60 301.60)">2.2kW 1.1kW</text><rect x="243.40" y="304.40" width="34.40" height="19.80" fill="#f3f2a4" stroke="#555" stroke-width="0.9"/><rect x="272.40" y="306.40" width="3" height="7.00" fill="#8c0f14"/><rect x="272.40" y="315.20" width="3" height="7.00" fill="#0b8a1c"/><rect x="253.80" y="308.04" width="16.80" height="4.2" rx="0.8" fill="#fff" stroke="#858585" stroke-width="0.9"/><path d="M266.00 311.74 L269.70 308.74 L269.70 311.74 Z" fill="#2f5a3a"/><rect x="267.80" y="308.54" width="2" height="1.8" fill="#3a9a4a"/><rect x="253.80" y="316.46" width="16.80" height="4.2" rx="0.8" fill="#fff" stroke="#858585" stroke-width="0.9"/><path d="M266.00 320.16 L269.70 317.16 L269.70 320.16 Z" fill="#2f5a3a"/><rect x="267.80" y="316.96" width="2" height="1.8" fill="#3a9a4a"/><text x="246.80" y="322.00" font-size="3" fill="#2c2c2c" text-anchor="start" transform="rotate(-90 246.80 322.00)">IT-Rack-3</text><text x="250.60" y="321.80" font-size="2.7" fill="#444" text-anchor="start" transform="rotate(-90 250.60 321.80)">2.2kW 1.1kW</text><rect x="243.40" y="325.00" width="34.40" height="19.60" fill="#c9c9c9" stroke="#6a6a6a" stroke-width="0.8"/><rect x="244.60" y="326.20" width="32.00" height="17.20" fill="#fcfcfc"/><rect x="272.40" y="327.00" width="3" height="6.90" fill="#8c0f14"/><rect x="272.40" y="335.70" width="3" height="6.90" fill="#0b8a1c"/><rect x="253.80" y="328.58" width="16.80" height="4.2" rx="0.8" fill="#fff" stroke="#858585" stroke-width="0.9"/><path d="M266.00 332.28 L269.70 329.28 L269.70 332.28 Z" fill="#2f5a3a"/><rect x="267.80" y="329.08" width="2" height="1.8" fill="#3a9a4a"/><rect x="253.80" y="336.91" width="16.80" height="4.2" rx="0.8" fill="#fff" stroke="#858585" stroke-width="0.9"/><path d="M266.00 340.61 L269.70 337.61 L269.70 340.61 Z" fill="#2f5a3a"/><rect x="267.80" y="337.41" width="2" height="1.8" fill="#3a9a4a"/><text x="246.80" y="342.40" font-size="3" fill="#2c2c2c" text-anchor="start" transform="rotate(-90 246.80 342.40)">IT-Rack-2</text><text x="250.60" y="342.20" font-size="2.7" fill="#444" text-anchor="start" transform="rotate(-90 250.60 342.20)">2.2kW 1.1kW</text><path d="M242.8 200.6 H279 M242.8 262.8 H279 M242.8 324.6 H279 M242.8 345.2 H279" stroke="#111" stroke-width="1.5" fill="none"/><path d="M278.4 200.6 V345" stroke="#222" stroke-width="1.2"/><rect x="276.6" y="198.6" width="3.4" height="3.4" fill="#3c9cf0" stroke="#1c6cc0" stroke-width="0.5"/><circle cx="245" cy="224.2" r="1.5" fill="#f4f7ff" stroke="#6a82cc" stroke-width="0.9"/><circle cx="245" cy="244.8" r="1.5" fill="#f4f7ff" stroke="#6a82cc" stroke-width="0.9"/><circle cx="245" cy="265.6" r="1.5" fill="#f4f7ff" stroke="#6a82cc" stroke-width="0.9"/><circle cx="245" cy="306.7" r="1.5" fill="#f4f7ff" stroke="#6a82cc" stroke-width="0.9"/><circle cx="245" cy="327.8" r="1.5" fill="#f4f7ff" stroke="#6a82cc" stroke-width="0.9"/><rect x="327.6" y="202.2" width="37" height="61.4" fill="#fff" stroke="#3a4a5a" stroke-width="1"/><path d="M329.2 204 V262" stroke="#58a8ec" stroke-width="1.2"/><path d="M329 262.6 H363" stroke="#9cc8f0" stroke-width="0.8"/><rect x="357.8" y="205" width="3" height="27.4" fill="#8c0f14"/><rect x="357.8" y="233.4" width="3" height="27.4" fill="#0b8a1c"/><circle cx="346.2" cy="233.3" r="2.1" fill="#fff" stroke="#d01828" stroke-width="1.3"/><rect x="362.4" y="260.6" width="3.2" height="3.2" fill="#3c9cf0" stroke="#1c6cc0" stroke-width="0.5"/><text x="334.80" y="249.00" font-size="2.6" fill="#666" text-anchor="start" transform="rotate(-90 334.80 249.00)">SanDiego-Room-CRAC-A</text><rect x="304.3" y="353.4" width="41" height="41.2" fill="#fff" stroke="#3c3c3c" stroke-width="1.2"/><path d="M304.3 354 V394" stroke="#b4b4b4" stroke-width="1.2"/><path d="M324.9 353.4 V394.6" stroke="#1e1e1e" stroke-width="1.5"/><rect x="306.2" y="355" width="16.6" height="1.6" fill="#707070"/><rect x="327" y="355" width="16.6" height="1.6" fill="#707070"/><text x="308.00" y="359.80" font-size="3" fill="#333" text-anchor="start">PowerXB..</text><text x="328.20" y="359.80" font-size="3" fill="#333" text-anchor="start">UPowerXB..</text><path d="M211.6 357 C213.4 355.6 215.6 358 216.2 361.4 L217.6 367.6 C221 366.2 226.4 366.6 230.6 369.6 C231 372 228.2 374.6 226.4 376.4 L225.2 388 C224.4 390.4 222.6 390.2 222 388 L220.8 380.4 C216.4 381.6 210.6 379.2 207.8 375.2 C207.6 372.6 209.6 370.2 211.4 368.6 C210.4 364.6 210.4 360 211.6 357 Z" fill="#8a8a84" stroke="#6e6e68" stroke-width="0.5"/><path d="M213 360 L216 368 L212.6 371 Z" fill="#a4a49c"/><path d="M222 380 L224 388 L225.4 377 Z" fill="#6c6c66"/><ellipse cx="219.4" cy="374.2" rx="4.2" ry="4" fill="#c6ca72" stroke="#9a9e48" stroke-width="0.5"/><ellipse cx="219.2" cy="372.8" rx="3.2" ry="1.8" fill="#dcdf92"/><rect x="408.4" y="351" width="158.8" height="112.4" fill="none" stroke="#2a2a2a" stroke-width="1"/><rect x="557.6" y="351.4" width="9.4" height="35.6" fill="none" stroke="#333" stroke-width="0.9"/><rect x="408.80" y="351.80" width="19.20" height="35.00" fill="#cfcfcf" stroke="#5a5a5a" stroke-width="0.8"/><rect x="410.40" y="353.20" width="16.40" height="31.00" fill="#f7f7f7"/><text x="418.40" y="357.70" font-size="2.9" fill="#444" text-anchor="middle">HD-Rack-1</text><text x="414.43" y="360.40" font-size="2.4" fill="#555" text-anchor="middle">1.1k</text><rect x="412.83" y="361.20" width="3.1" height="16.60" fill="#fff" stroke="#8c8c8c" stroke-width="0.8"/><path d="M413.23 377.40 L413.23 374.20 L415.53 377.40 Z" fill="#2a8a3a"/><rect x="413.23" y="372.60" width="1.4" height="1.6" fill="#777"/><text x="421.92" y="360.40" font-size="2.4" fill="#555" text-anchor="middle">1.1k</text><rect x="420.32" y="361.20" width="3.1" height="16.60" fill="#fff" stroke="#8c8c8c" stroke-width="0.8"/><path d="M420.72 377.40 L420.72 374.20 L423.02 377.40 Z" fill="#2a8a3a"/><rect x="420.72" y="372.60" width="1.4" height="1.6" fill="#777"/><rect x="411.00" y="379.80" width="6.72" height="2.8" rx="0.5" fill="#0b8a1c"/><rect x="419.17" y="379.80" width="6.72" height="2.8" rx="0.5" fill="#8c0f14"/><rect x="428.80" y="351.80" width="9.80" height="35.00" fill="#f8fcff" stroke="#6c7c8c" stroke-width="0.8"/><rect x="429.40" y="352.60" width="4.41" height="33.40" fill="#d4e9f9"/><rect x="429.40" y="384.20" width="8.60" height="1.8" fill="#9ccdf2"/><text x="433.70" y="357.80" font-size="2.6" fill="#567" text-anchor="middle">C..</text><rect x="431.20" y="379.80" width="5.00" height="2.7" fill="#0b8a1c"/><rect x="439.60" y="351.80" width="19.60" height="35.00" fill="#cfcfcf" stroke="#5a5a5a" stroke-width="0.8"/><rect x="441.20" y="353.20" width="16.80" height="31.00" fill="#f7f7f7"/><text x="449.40" y="357.70" font-size="2.9" fill="#444" text-anchor="middle">HD-Rack-2</text><text x="445.32" y="360.40" font-size="2.4" fill="#555" text-anchor="middle">1.1k</text><rect x="443.72" y="361.20" width="3.1" height="16.60" fill="#fff" stroke="#8c8c8c" stroke-width="0.8"/><path d="M444.12 377.40 L444.12 374.20 L446.42 377.40 Z" fill="#2a8a3a"/><rect x="444.12" y="372.60" width="1.4" height="1.6" fill="#777"/><text x="452.96" y="360.40" font-size="2.4" fill="#555" text-anchor="middle">1.1k</text><rect x="451.36" y="361.20" width="3.1" height="16.60" fill="#fff" stroke="#8c8c8c" stroke-width="0.8"/><path d="M451.76 377.40 L451.76 374.20 L454.06 377.40 Z" fill="#2a8a3a"/><rect x="451.76" y="372.60" width="1.4" height="1.6" fill="#777"/><rect x="441.80" y="379.80" width="6.86" height="2.8" rx="0.5" fill="#0b8a1c"/><rect x="450.18" y="379.80" width="6.86" height="2.8" rx="0.5" fill="#8c0f14"/><path d="M455.60 352.20 H458.80 V355.80 Z" fill="#6a8ad8"/><rect x="460.20" y="351.80" width="20.00" height="35.00" fill="#fff" stroke="#6c7c8c" stroke-width="0.8"/><rect x="460.80" y="352.60" width="1.8" height="33.40" fill="#b8dcf6"/><rect x="460.80" y="384.00" width="18.80" height="2" fill="#9ccdf2"/><rect x="478.40" y="352.60" width="1.2" height="33.40" fill="#cfe6f8"/><text x="470.20" y="357.80" font-size="2.7" fill="#555" text-anchor="middle">HD-Blnk..</text><rect x="462.80" y="379.80" width="14.60" height="2.7" fill="#0b8a1c"/><rect x="481.00" y="351.80" width="20.20" height="35.00" fill="#cfcfcf" stroke="#5a5a5a" stroke-width="0.8"/><rect x="482.60" y="353.20" width="17.40" height="31.00" fill="#f7f7f7"/><text x="491.10" y="357.70" font-size="2.9" fill="#444" text-anchor="middle">HD-Rack-3</text><text x="486.84" y="360.40" font-size="2.4" fill="#555" text-anchor="middle">1.1k</text><rect x="485.24" y="361.20" width="3.1" height="16.60" fill="#fff" stroke="#8c8c8c" stroke-width="0.8"/><path d="M485.64 377.40 L485.64 374.20 L487.94 377.40 Z" fill="#2a8a3a"/><rect x="485.64" y="372.60" width="1.4" height="1.6" fill="#777"/><text x="494.72" y="360.40" font-size="2.4" fill="#555" text-anchor="middle">1.1k</text><rect x="493.12" y="361.20" width="3.1" height="16.60" fill="#fff" stroke="#8c8c8c" stroke-width="0.8"/><path d="M493.52 377.40 L493.52 374.20 L495.82 377.40 Z" fill="#2a8a3a"/><rect x="493.52" y="372.60" width="1.4" height="1.6" fill="#777"/><rect x="483.20" y="379.80" width="7.07" height="2.8" rx="0.5" fill="#0b8a1c"/><rect x="491.91" y="379.80" width="7.07" height="2.8" rx="0.5" fill="#8c0f14"/><rect x="502.20" y="351.80" width="9.00" height="35.00" fill="#f8fcff" stroke="#6c7c8c" stroke-width="0.8"/><rect x="502.80" y="352.60" width="4.05" height="33.40" fill="#d4e9f9"/><rect x="502.80" y="384.20" width="7.80" height="1.8" fill="#9ccdf2"/><text x="506.70" y="357.80" font-size="2.6" fill="#567" text-anchor="middle">C..</text><rect x="504.60" y="379.80" width="4.20" height="2.7" fill="#8c0f14"/><rect x="512.20" y="351.80" width="19.20" height="35.00" fill="#cfcfcf" stroke="#5a5a5a" stroke-width="0.8"/><rect x="513.80" y="353.20" width="16.40" height="31.00" fill="#f7f7f7"/><text x="521.80" y="357.70" font-size="2.9" fill="#444" text-anchor="middle">HD-Rack-4</text><text x="517.83" y="360.40" font-size="2.4" fill="#555" text-anchor="middle">1.1k</text><rect x="516.23" y="361.20" width="3.1" height="16.60" fill="#fff" stroke="#8c8c8c" stroke-width="0.8"/><path d="M516.63 377.40 L516.63 374.20 L518.93 377.40 Z" fill="#2a8a3a"/><rect x="516.63" y="372.60" width="1.4" height="1.6" fill="#777"/><text x="525.32" y="360.40" font-size="2.4" fill="#555" text-anchor="middle">1.1k</text><rect x="523.72" y="361.20" width="3.1" height="16.60" fill="#fff" stroke="#8c8c8c" stroke-width="0.8"/><path d="M524.12 377.40 L524.12 374.20 L526.42 377.40 Z" fill="#2a8a3a"/><rect x="524.12" y="372.60" width="1.4" height="1.6" fill="#777"/><rect x="514.40" y="379.80" width="6.72" height="2.8" rx="0.5" fill="#0b8a1c"/><rect x="522.57" y="379.80" width="6.72" height="2.8" rx="0.5" fill="#8c0f14"/><path d="M527.80 352.20 H531.00 V355.80 Z" fill="#6a8ad8"/><rect x="532.20" y="351.80" width="25.20" height="35.00" fill="#d9f0c6" stroke="#262626" stroke-width="1.2"/><rect x="533.60" y="353.20" width="22.40" height="32.20" fill="#f2faea" stroke="#6cb445" stroke-width="1.5"/><text x="545.80" y="357.40" font-size="2.4" fill="#666" text-anchor="middle">SanDiego..</text><rect x="537.20" y="358.80" width="3.4" height="18.60" fill="#fff" stroke="#8c8c8c" stroke-width="0.8"/><rect x="537.70" y="372.20" width="2.4" height="4.8" fill="#8e94a8"/><rect x="548.60" y="358.80" width="3.4" height="18.60" fill="#fff" stroke="#8c8c8c" stroke-width="0.8"/><rect x="549.10" y="372.20" width="2.4" height="4.8" fill="#3a9a4a"/><rect x="533.40" y="353.00" width="2.6" height="2.6" fill="#dfe8d8" stroke="#667" stroke-width="0.4"/><rect x="535.20" y="379.60" width="18.80" height="2.7" fill="#8c0f14"/><rect x="532.60" y="383.40" width="3.2" height="3.2" fill="#3c9cf0" stroke="#1c6cc0" stroke-width="0.5"/><rect x="408.80" y="427.40" width="19.20" height="35.60" fill="#cfcfcf" stroke="#5a5a5a" stroke-width="0.8"/><rect x="410.40" y="428.80" width="16.40" height="31.60" fill="#f7f7f7"/><text x="418.40" y="433.30" font-size="2.9" fill="#444" text-anchor="middle">HD-Rack-5</text><text x="414.43" y="436.00" font-size="2.4" fill="#555" text-anchor="middle">1.1k</text><rect x="412.83" y="436.80" width="3.1" height="17.20" fill="#fff" stroke="#8c8c8c" stroke-width="0.8"/><path d="M413.23 453.60 L413.23 450.40 L415.53 453.60 Z" fill="#2a8a3a"/><rect x="413.23" y="448.80" width="1.4" height="1.6" fill="#777"/><text x="421.92" y="436.00" font-size="2.4" fill="#555" text-anchor="middle">1.1k</text><rect x="420.32" y="436.80" width="3.1" height="17.20" fill="#fff" stroke="#8c8c8c" stroke-width="0.8"/><path d="M420.72 453.60 L420.72 450.40 L423.02 453.60 Z" fill="#2a8a3a"/><rect x="420.72" y="448.80" width="1.4" height="1.6" fill="#777"/><rect x="411.00" y="456.00" width="6.72" height="2.8" rx="0.5" fill="#0b8a1c"/><rect x="419.17" y="456.00" width="6.72" height="2.8" rx="0.5" fill="#8c0f14"/><rect x="428.80" y="427.40" width="9.80" height="35.60" fill="#f8fcff" stroke="#6c7c8c" stroke-width="0.8"/><rect x="429.40" y="428.20" width="4.41" height="34.00" fill="#d4e9f9"/><rect x="429.40" y="460.40" width="8.60" height="1.8" fill="#9ccdf2"/><text x="433.70" y="433.40" font-size="2.6" fill="#567" text-anchor="middle">C..</text><rect x="431.20" y="456.00" width="5.00" height="2.7" fill="#8c0f14"/><rect x="439.60" y="427.40" width="19.60" height="35.60" fill="#cfcfcf" stroke="#5a5a5a" stroke-width="0.8"/><rect x="441.20" y="428.80" width="16.80" height="31.60" fill="#f7f7f7"/><text x="449.40" y="433.30" font-size="2.9" fill="#444" text-anchor="middle">HD-Rack-6</text><text x="445.32" y="436.00" font-size="2.4" fill="#555" text-anchor="middle">1.1k</text><rect x="443.72" y="436.80" width="3.1" height="17.20" fill="#fff" stroke="#8c8c8c" stroke-width="0.8"/><path d="M444.12 453.60 L444.12 450.40 L446.42 453.60 Z" fill="#2a8a3a"/><rect x="444.12" y="448.80" width="1.4" height="1.6" fill="#777"/><text x="452.96" y="436.00" font-size="2.4" fill="#555" text-anchor="middle">1.1k</text><rect x="451.36" y="436.80" width="3.1" height="17.20" fill="#fff" stroke="#8c8c8c" stroke-width="0.8"/><path d="M451.76 453.60 L451.76 450.40 L454.06 453.60 Z" fill="#2a8a3a"/><rect x="451.76" y="448.80" width="1.4" height="1.6" fill="#777"/><rect x="441.80" y="456.00" width="6.86" height="2.8" rx="0.5" fill="#0b8a1c"/><rect x="450.18" y="456.00" width="6.86" height="2.8" rx="0.5" fill="#8c0f14"/><path d="M455.60 427.80 H458.80 V431.40 Z" fill="#6a8ad8"/><rect x="460.20" y="427.40" width="20.00" height="35.60" fill="#fff" stroke="#6c7c8c" stroke-width="0.8"/><rect x="460.80" y="428.20" width="1.8" height="34.00" fill="#b8dcf6"/><rect x="460.80" y="460.20" width="18.80" height="2" fill="#9ccdf2"/><rect x="478.40" y="428.20" width="1.2" height="34.00" fill="#cfe6f8"/><text x="470.20" y="433.40" font-size="2.7" fill="#555" text-anchor="middle">HD-Blnk..</text><rect x="462.80" y="456.00" width="14.60" height="2.7" fill="#8c0f14"/><rect x="481.00" y="427.40" width="20.20" height="35.60" fill="#cfcfcf" stroke="#5a5a5a" stroke-width="0.8"/><rect x="482.60" y="428.80" width="17.40" height="31.60" fill="#f7f7f7"/><text x="491.10" y="433.30" font-size="2.9" fill="#444" text-anchor="middle">HD-Rack-7</text><text x="486.84" y="436.00" font-size="2.4" fill="#555" text-anchor="middle">1.1k</text><rect x="485.24" y="436.80" width="3.1" height="17.20" fill="#fff" stroke="#8c8c8c" stroke-width="0.8"/><path d="M485.64 453.60 L485.64 450.40 L487.94 453.60 Z" fill="#2a8a3a"/><rect x="485.64" y="448.80" width="1.4" height="1.6" fill="#777"/><text x="494.72" y="436.00" font-size="2.4" fill="#555" text-anchor="middle">1.1k</text><rect x="493.12" y="436.80" width="3.1" height="17.20" fill="#fff" stroke="#8c8c8c" stroke-width="0.8"/><path d="M493.52 453.60 L493.52 450.40 L495.82 453.60 Z" fill="#2a8a3a"/><rect x="493.52" y="448.80" width="1.4" height="1.6" fill="#777"/><rect x="483.20" y="456.00" width="7.07" height="2.8" rx="0.5" fill="#0b8a1c"/><rect x="491.91" y="456.00" width="7.07" height="2.8" rx="0.5" fill="#8c0f14"/><rect x="502.20" y="427.40" width="9.00" height="35.60" fill="#f8fcff" stroke="#6c7c8c" stroke-width="0.8"/><rect x="502.80" y="428.20" width="4.05" height="34.00" fill="#d4e9f9"/><rect x="502.80" y="460.40" width="7.80" height="1.8" fill="#9ccdf2"/><text x="506.70" y="433.40" font-size="2.6" fill="#567" text-anchor="middle">C..</text><rect x="504.60" y="456.00" width="4.20" height="2.7" fill="#0b8a1c"/><rect x="512.20" y="427.40" width="19.20" height="35.60" fill="#cfcfcf" stroke="#5a5a5a" stroke-width="0.8"/><rect x="513.80" y="428.80" width="16.40" height="31.60" fill="#f7f7f7"/><text x="521.80" y="433.30" font-size="2.9" fill="#444" text-anchor="middle">HD-Rack-8</text><text x="517.83" y="436.00" font-size="2.4" fill="#555" text-anchor="middle">1.1k</text><rect x="516.23" y="436.80" width="3.1" height="17.20" fill="#fff" stroke="#8c8c8c" stroke-width="0.8"/><path d="M516.63 453.60 L516.63 450.40 L518.93 453.60 Z" fill="#2a8a3a"/><rect x="516.63" y="448.80" width="1.4" height="1.6" fill="#777"/><text x="525.32" y="436.00" font-size="2.4" fill="#555" text-anchor="middle">1.1k</text><rect x="523.72" y="436.80" width="3.1" height="17.20" fill="#fff" stroke="#8c8c8c" stroke-width="0.8"/><path d="M524.12 453.60 L524.12 450.40 L526.42 453.60 Z" fill="#2a8a3a"/><rect x="524.12" y="448.80" width="1.4" height="1.6" fill="#777"/><rect x="514.40" y="456.00" width="6.72" height="2.8" rx="0.5" fill="#0b8a1c"/><rect x="522.57" y="456.00" width="6.72" height="2.8" rx="0.5" fill="#8c0f14"/><path d="M527.80 427.80 H531.00 V431.40 Z" fill="#6a8ad8"/><rect x="532.20" y="427.40" width="25.20" height="35.60" fill="#d9f0c6" stroke="#262626" stroke-width="1.2"/><rect x="533.60" y="428.80" width="22.40" height="32.80" fill="#f2faea" stroke="#6cb445" stroke-width="1.5"/><text x="545.80" y="433.00" font-size="2.4" fill="#666" text-anchor="middle">SanDiego..</text><rect x="537.20" y="434.40" width="3.4" height="19.20" fill="#fff" stroke="#8c8c8c" stroke-width="0.8"/><rect x="537.70" y="448.40" width="2.4" height="4.8" fill="#8e94a8"/><rect x="548.60" y="434.40" width="3.4" height="19.20" fill="#fff" stroke="#8c8c8c" stroke-width="0.8"/><rect x="549.10" y="448.40" width="2.4" height="4.8" fill="#3a9a4a"/><rect x="533.40" y="428.60" width="2.6" height="2.6" fill="#dfe8d8" stroke="#667" stroke-width="0.4"/><rect x="535.20" y="455.80" width="18.80" height="2.7" fill="#0b8a1c"/><rect x="532.60" y="459.60" width="3.2" height="3.2" fill="#3c9cf0" stroke="#1c6cc0" stroke-width="0.5"/><path d="M408 351.2 H558 M408 387.2 H558 M408 427 H558 M408 463.4 H558" stroke="#1c1c1c" stroke-width="1.5"/><path d="M439.1 351.2 V387.2 M439.1 427 V463.4" stroke="#1a1a1a" stroke-width="1.4"/><path d="M459.7 351.2 V387.2 M459.7 427 V463.4" stroke="#1a1a1a" stroke-width="1.4"/><path d="M480.6 351.2 V387.2 M480.6 427 V463.4" stroke="#1a1a1a" stroke-width="1.4"/><path d="M511.7 351.2 V387.2 M511.7 427 V463.4" stroke="#1a1a1a" stroke-width="1.4"/><path d="M531.8 351.2 V387.2 M531.8 427 V463.4" stroke="#1a1a1a" stroke-width="1.4"/><path d="M557.6 351.2 V387.2 M557.6 427 V463.4" stroke="#1a1a1a" stroke-width="1.4"/><text x="411.2" y="350" font-size="7.4" fill="#222" stroke="#222" stroke-width="0.25" textLength="17.6" lengthAdjust="spacingAndGlyphs">HD-A</text><text x="411.2" y="425.6" font-size="7.4" fill="#222" stroke="#222" stroke-width="0.25" textLength="17.6" lengthAdjust="spacingAndGlyphs">HD-B</text><text x="184.6" y="424.2" font-size="7.6" fill="#8c8c8c" stroke="#e2e2e2" stroke-width="0.5" paint-order="stroke" textLength="36.6" lengthAdjust="spacingAndGlyphs">Dev-Row-A</text><rect x="180.50" y="425.80" width="19.72" height="36.60" fill="#cfcfcf" stroke="#6a6a6a" stroke-width="0.9"/><rect x="182.20" y="428.00" width="16.32" height="32.40" fill="#fbfbfb"/><text x="190.36" y="432.20" font-size="2.9" fill="#444" text-anchor="middle">Dev-Rac..</text><text x="186.24" y="435.80" font-size="2.4" fill="#555" text-anchor="middle">1.1k</text><rect x="184.64" y="437.20" width="3.1" height="16.80" fill="#fff" stroke="#8c8c8c" stroke-width="0.8"/><path d="M185.04 453.60 L185.04 450.40 L187.34 453.60 Z" fill="#2a8a3a"/><rect x="185.04" y="448.80" width="1.4" height="1.6" fill="#777"/><text x="193.93" y="435.80" font-size="2.4" fill="#555" text-anchor="middle">1.1k</text><rect x="192.33" y="437.20" width="3.1" height="16.80" fill="#fff" stroke="#8c8c8c" stroke-width="0.8"/><path d="M192.73 453.60 L192.73 450.40 L195.03 453.60 Z" fill="#2a8a3a"/><rect x="192.73" y="448.80" width="1.4" height="1.6" fill="#777"/><rect x="182.70" y="455.40" width="6.90" height="2.8" rx="0.5" fill="#0b8a1c"/><rect x="191.15" y="455.40" width="6.90" height="2.8" rx="0.5" fill="#8c0f14"/><rect x="201.12" y="425.80" width="19.72" height="36.60" fill="#cfcfcf" stroke="#6a6a6a" stroke-width="0.9"/><rect x="202.82" y="428.00" width="16.32" height="32.40" fill="#fbfbfb"/><text x="210.98" y="432.20" font-size="2.9" fill="#444" text-anchor="middle">Dev-Rac..</text><text x="206.86" y="435.80" font-size="2.4" fill="#555" text-anchor="middle">1.1k</text><rect x="205.26" y="437.20" width="3.1" height="16.80" fill="#fff" stroke="#8c8c8c" stroke-width="0.8"/><path d="M205.66 453.60 L205.66 450.40 L207.96 453.60 Z" fill="#2a8a3a"/><rect x="205.66" y="448.80" width="1.4" height="1.6" fill="#777"/><text x="214.55" y="435.80" font-size="2.4" fill="#555" text-anchor="middle">1.1k</text><rect x="212.95" y="437.20" width="3.1" height="16.80" fill="#fff" stroke="#8c8c8c" stroke-width="0.8"/><path d="M213.35 453.60 L213.35 450.40 L215.65 453.60 Z" fill="#2a8a3a"/><rect x="213.35" y="448.80" width="1.4" height="1.6" fill="#777"/><rect x="203.32" y="455.40" width="6.90" height="2.8" rx="0.5" fill="#0b8a1c"/><rect x="211.77" y="455.40" width="6.90" height="2.8" rx="0.5" fill="#8c0f14"/><rect x="221.74" y="425.80" width="19.72" height="36.60" fill="#cfcfcf" stroke="#6a6a6a" stroke-width="0.9"/><rect x="223.44" y="428.00" width="16.32" height="32.40" fill="#fbfbfb"/><text x="231.60" y="432.20" font-size="2.9" fill="#444" text-anchor="middle">Dev-Rac..</text><text x="227.48" y="435.80" font-size="2.4" fill="#555" text-anchor="middle">1.1k</text><rect x="225.88" y="437.20" width="3.1" height="16.80" fill="#fff" stroke="#8c8c8c" stroke-width="0.8"/><path d="M226.28 453.60 L226.28 450.40 L228.58 453.60 Z" fill="#2a8a3a"/><rect x="226.28" y="448.80" width="1.4" height="1.6" fill="#777"/><text x="235.17" y="435.80" font-size="2.4" fill="#555" text-anchor="middle">1.1k</text><rect x="233.57" y="437.20" width="3.1" height="16.80" fill="#fff" stroke="#8c8c8c" stroke-width="0.8"/><path d="M233.97 453.60 L233.97 450.40 L236.27 453.60 Z" fill="#2a8a3a"/><rect x="233.97" y="448.80" width="1.4" height="1.6" fill="#777"/><rect x="223.94" y="455.40" width="6.90" height="2.8" rx="0.5" fill="#0b8a1c"/><rect x="232.39" y="455.40" width="6.90" height="2.8" rx="0.5" fill="#8c0f14"/><rect x="242.36" y="425.80" width="19.72" height="36.60" fill="#cfcfcf" stroke="#6a6a6a" stroke-width="0.9"/><rect x="244.06" y="428.00" width="16.32" height="32.40" fill="#fbfbfb"/><text x="252.22" y="432.20" font-size="2.9" fill="#444" text-anchor="middle">Dev-Rac..</text><text x="248.10" y="435.80" font-size="2.4" fill="#555" text-anchor="middle">1.1k</text><rect x="246.50" y="437.20" width="3.1" height="16.80" fill="#fff" stroke="#8c8c8c" stroke-width="0.8"/><path d="M246.90 453.60 L246.90 450.40 L249.20 453.60 Z" fill="#2a8a3a"/><rect x="246.90" y="448.80" width="1.4" height="1.6" fill="#777"/><text x="255.79" y="435.80" font-size="2.4" fill="#555" text-anchor="middle">1.1k</text><rect x="254.19" y="437.20" width="3.1" height="16.80" fill="#fff" stroke="#8c8c8c" stroke-width="0.8"/><path d="M254.59 453.60 L254.59 450.40 L256.89 453.60 Z" fill="#2a8a3a"/><rect x="254.59" y="448.80" width="1.4" height="1.6" fill="#777"/><rect x="244.56" y="455.40" width="6.90" height="2.8" rx="0.5" fill="#0b8a1c"/><rect x="253.01" y="455.40" width="6.90" height="2.8" rx="0.5" fill="#8c0f14"/><path d="M180 425.6 H268.6 V462.6 H180 Z" stroke="#3a3a3a" stroke-width="1.2" fill="none"/><path d="M200.7 425.6 V462.6" stroke="#111" stroke-width="1.5"/><path d="M221.3 425.6 V462.6 M241.9 425.6 V462.6 M262.6 425.6 V462.6" stroke="#444" stroke-width="1"/><rect x="263.1" y="426.2" width="5" height="35.8" fill="#f6f6f6"/><path d="M266 425.6 H268.6 V428" stroke="#222" stroke-width="1.6" fill="none"/></svg><div style="position:absolute;left:61.00px;top:518.00px;width:1079.00px;height:249.60px;background:#fff;"></div><div style="position:absolute;left:61.00px;top:515.30px;width:3.00px;height:267.70px;background:#b4c3d9;"></div><span id="t16" style="position:absolute;left:69.50px;transform-origin:0 50%;top:521.47px;font-size:9.9px;line-height:12.87px;font-weight:400;color:#141414;white-space:nowrap;transform:scaleX(0.8637);">Item</span><svg style="position:absolute;left:152.6px;top:518.4px" width="8" height="5" viewBox="0 0 8 5"><path d="M1 4 L4 1.2 L7 4" fill="none" stroke="#8a8a8a" stroke-width="0.9"/></svg><span id="t17" style="position:absolute;left:251.70px;transform-origin:0 50%;top:521.47px;font-size:9.9px;line-height:12.87px;font-weight:400;color:#141414;white-space:nowrap;transform:scaleX(0.8917);">Location</span><span id="t18" style="position:absolute;left:397.60px;transform-origin:0 50%;top:521.47px;font-size:9.9px;line-height:12.87px;font-weight:400;color:#141414;white-space:nowrap;transform:scaleX(0.8067);">Phase</span><span id="t19" style="position:absolute;left:470.60px;transform-origin:0 50%;top:521.47px;font-size:9.9px;line-height:12.87px;font-weight:400;color:#141414;white-space:nowrap;transform:scaleX(0.8953);">Outlet</span><span id="t20" style="position:absolute;left:829.40px;transform-origin:0 50%;top:521.47px;font-size:9.9px;line-height:12.87px;font-weight:400;color:#141414;white-space:nowrap;transform:scaleX(0.9135);">Reserved for Di...</span><span id="t21" style="position:absolute;right:228.20px;transform-origin:100% 50%;top:521.47px;font-size:9.9px;line-height:12.87px;font-weight:400;color:#141414;white-space:nowrap;transform:scaleX(0.8467);">Total load</span><span id="t22" style="position:absolute;left:985.00px;transform-origin:0 50%;top:521.47px;font-size:9.9px;line-height:12.87px;font-weight:400;color:#141414;white-space:nowrap;transform:scaleX(0.8445);">Remaining Ca...</span><span id="t23" style="position:absolute;right:82.20px;transform-origin:100% 50%;top:521.47px;font-size:9.9px;line-height:12.87px;font-weight:400;color:#141414;white-space:nowrap;transform:scaleX(0.8761);">Power Limit</span><div style="position:absolute;left:1122px;top:518px;width:18px;height:18px;overflow:hidden"><span id="t24" style="position:absolute;left:7.30px;transform-origin:0 50%;top:2.96px;font-size:9.9px;line-height:12.87px;font-weight:400;color:#141414;white-space:nowrap;transform:scaleX(0.9500);">Rem</span></div><div style="position:absolute;left:246.00px;top:518.00px;width:1.00px;height:249.60px;background:#efefef;"></div><div style="position:absolute;left:392.40px;top:518.00px;width:1.00px;height:249.60px;background:#efefef;"></div><div style="position:absolute;left:465.60px;top:518.00px;width:1.00px;height:249.60px;background:#efefef;"></div><div style="position:absolute;left:537.60px;top:518.00px;width:1.00px;height:249.60px;background:#efefef;"></div><div style="position:absolute;left:902.00px;top:518.00px;width:1.00px;height:249.60px;background:#efefef;"></div><div style="position:absolute;left:976.50px;top:518.00px;width:1.00px;height:249.60px;background:#efefef;"></div><div style="position:absolute;left:1049.50px;top:518.00px;width:1.00px;height:249.60px;background:#efefef;"></div><div style="position:absolute;left:1122.00px;top:518.00px;width:1.00px;height:249.60px;background:#efefef;"></div><div style="position:absolute;left:0;top:0;width:1200px;height:767.6px;overflow:hidden"><div style="position:absolute;left:94.60px;top:536.70px;width:69.40px;height:12.12px;background:#f2f2f2;border:1px solid #c8c8c8;box-sizing:border-box;"></div><svg style="position:absolute;left:69.00px;top:540.46px" width="7" height="5" viewBox="0 0 7 5"><path d="M0.8 0.8 L3.5 3.8 L6.2 0.8" fill="none" stroke="#3a3a3a" stroke-width="1.1"/></svg><div style="position:absolute;left:82.00px;top:537.26px;width:10.80px;height:10.80px;border:1.6px solid #c9a040;background:#fff;box-sizing:border-box;"></div><span id="t25" style="position:absolute;left:85.90px;transform-origin:0 50%;top:540.13px;font-size:4.2px;line-height:5.46px;font-weight:400;color:#555;white-space:nowrap;transform:scaleX(1.0000);">U</span><span id="t26" style="position:absolute;left:97.00px;transform-origin:0 50%;top:536.83px;font-size:9.9px;line-height:12.87px;font-weight:400;color:#141414;white-space:nowrap;transform:scaleX(0.8329);">SanDiego-UPS-A</span><span id="t27" style="position:absolute;left:251.30px;transform-origin:0 50%;top:536.83px;font-size:9.9px;line-height:12.87px;font-weight:400;color:#141414;white-space:nowrap;transform:scaleX(0.8463);">San Diego UPS Room/San Diego/...</span><span id="t28" style="position:absolute;right:226.00px;transform-origin:100% 50%;top:536.83px;font-size:9.9px;line-height:12.87px;font-weight:400;color:#141414;white-space:nowrap;transform:scaleX(0.8126);">84.82 kW</span><span id="t29" style="position:absolute;right:153.00px;transform-origin:100% 50%;top:536.83px;font-size:9.9px;line-height:12.87px;font-weight:400;color:#141414;white-space:nowrap;transform:scaleX(0.8197);">665.181 kW</span><span id="t30" style="position:absolute;right:80.00px;transform-origin:100% 50%;top:536.83px;font-size:9.9px;line-height:12.87px;font-weight:400;color:#141414;white-space:nowrap;transform:scaleX(0.8108);">750 kW</span><div style="position:absolute;left:64.00px;top:548.72px;width:1076.00px;height:1.00px;background:#f0f0f0;"></div><svg style="position:absolute;left:82.75px;top:553.58px" width="7" height="5" viewBox="0 0 7 5"><path d="M0.8 0.8 L3.5 3.8 L6.2 0.8" fill="none" stroke="#3a3a3a" stroke-width="1.1"/></svg><div style="position:absolute;left:95.75px;top:550.38px;width:10.80px;height:10.80px;border:1.6px solid #58b83c;background:#fff;box-sizing:border-box;"></div><span id="t31" style="position:absolute;left:99.65px;transform-origin:0 50%;top:553.25px;font-size:4.2px;line-height:5.46px;font-weight:400;color:#555;white-space:nowrap;transform:scaleX(1.0000);">P</span><span id="t32" style="position:absolute;left:110.75px;transform-origin:0 50%;top:549.95px;font-size:9.9px;line-height:12.87px;font-weight:400;color:#141414;white-space:nowrap;transform:scaleX(0.8464);">SanDiego-PDU-A</span><span id="t33" style="position:absolute;left:251.30px;transform-origin:0 50%;top:549.95px;font-size:9.9px;line-height:12.87px;font-weight:400;color:#141414;white-space:nowrap;transform:scaleX(0.8463);">San Diego UPS Room/San Diego/...</span><span id="t34" style="position:absolute;left:397.20px;transform-origin:0 50%;top:549.95px;font-size:9.9px;line-height:12.87px;font-weight:400;color:#141414;white-space:nowrap;transform:scaleX(0.8348);">L1-L2-L3</span><span id="t35" style="position:absolute;right:226.00px;transform-origin:100% 50%;top:549.95px;font-size:9.9px;line-height:12.87px;font-weight:400;color:#141414;white-space:nowrap;transform:scaleX(0.8126);">88.01 kW</span><span id="t36" style="position:absolute;right:153.00px;transform-origin:100% 50%;top:549.95px;font-size:9.9px;line-height:12.87px;font-weight:400;color:#141414;white-space:nowrap;transform:scaleX(0.8164);">661.99 kW</span><span id="t37" style="position:absolute;right:80.00px;transform-origin:100% 50%;top:549.95px;font-size:9.9px;line-height:12.87px;font-weight:400;color:#141414;white-space:nowrap;transform:scaleX(0.8108);">750 kW</span><div style="position:absolute;left:64.00px;top:561.84px;width:1076.00px;height:1.00px;background:#f0f0f0;"></div><div style="position:absolute;left:109.50px;top:563.50px;width:10.80px;height:10.80px;border:1.6px solid #3c8cd4;background:#fff;box-sizing:border-box;"></div><span id="t38" style="position:absolute;left:113.40px;transform-origin:0 50%;top:566.37px;font-size:4.2px;line-height:5.46px;font-weight:400;color:#555;white-space:nowrap;transform:scaleX(1.0000);">C</span><span id="t39" style="position:absolute;left:124.50px;transform-origin:0 50%;top:563.07px;font-size:9.9px;line-height:12.87px;font-weight:400;color:#141414;white-space:nowrap;transform:scaleX(0.8423);">SanDiego-CRAC-A</span><span id="t40" style="position:absolute;left:251.30px;transform-origin:0 50%;top:563.07px;font-size:9.9px;line-height:12.87px;font-weight:400;color:#141414;white-space:nowrap;transform:scaleX(0.8463);">San Diego UPS Room/San Diego/...</span><span id="t41" style="position:absolute;left:397.20px;transform-origin:0 50%;top:563.07px;font-size:9.9px;line-height:12.87px;font-weight:400;color:#141414;white-space:nowrap;transform:scaleX(0.8348);">L1-L2-L3</span><div style="position:absolute;left:64.00px;top:574.96px;width:1076.00px;height:1.00px;background:#f0f0f0;"></div><div style="position:absolute;left:109.50px;top:576.62px;width:10.80px;height:10.80px;border:1.6px solid #3c8cd4;background:#fff;box-sizing:border-box;"></div><span id="t42" style="position:absolute;left:113.40px;transform-origin:0 50%;top:579.49px;font-size:4.2px;line-height:5.46px;font-weight:400;color:#555;white-space:nowrap;transform:scaleX(1.0000);">C</span><span id="t43" style="position:absolute;left:124.50px;transform-origin:0 50%;top:576.19px;font-size:9.9px;line-height:12.87px;font-weight:400;color:#141414;white-space:nowrap;transform:scaleX(0.8629);">SanDiego-Room-CRAC-A</span><span id="t44" style="position:absolute;left:251.30px;transform-origin:0 50%;top:576.19px;font-size:9.9px;line-height:12.87px;font-weight:400;color:#141414;white-space:nowrap;transform:scaleX(0.8571);">San Diego Data Center/San Diego/...</span><span id="t45" style="position:absolute;left:397.20px;transform-origin:0 50%;top:576.19px;font-size:9.9px;line-height:12.87px;font-weight:400;color:#141414;white-space:nowrap;transform:scaleX(0.8348);">L1-L2-L3</span><div style="position:absolute;left:64.00px;top:588.08px;width:1076.00px;height:1.00px;background:#f0f0f0;"></div><div style="position:absolute;left:109.50px;top:589.74px;width:10.80px;height:10.80px;border:1.6px solid #3c8cd4;background:#fff;box-sizing:border-box;"></div><span id="t46" style="position:absolute;left:113.40px;transform-origin:0 50%;top:592.61px;font-size:4.2px;line-height:5.46px;font-weight:400;color:#555;white-space:nowrap;transform:scaleX(1.0000);">C</span><span id="t47" style="position:absolute;left:124.50px;transform-origin:0 50%;top:589.31px;font-size:9.9px;line-height:12.87px;font-weight:400;color:#141414;white-space:nowrap;transform:scaleX(0.8602);">SanDiego-Room-CRAC-B</span><span id="t48" style="position:absolute;left:251.30px;transform-origin:0 50%;top:589.31px;font-size:9.9px;line-height:12.87px;font-weight:400;color:#141414;white-space:nowrap;transform:scaleX(0.8571);">San Diego Data Center/San Diego/...</span><span id="t49" style="position:absolute;left:397.20px;transform-origin:0 50%;top:589.31px;font-size:9.9px;line-height:12.87px;font-weight:400;color:#141414;white-space:nowrap;transform:scaleX(0.8348);">L1-L2-L3</span><div style="position:absolute;left:64.00px;top:601.20px;width:1076.00px;height:1.00px;background:#f0f0f0;"></div><svg style="position:absolute;left:96.50px;top:606.06px" width="7" height="5" viewBox="0 0 7 5"><path d="M0.8 0.8 L3.5 3.8 L6.2 0.8" fill="none" stroke="#3a3a3a" stroke-width="1.1"/></svg><div style="position:absolute;left:109.50px;top:602.86px;width:10.80px;height:10.80px;border:1.6px solid #58b83c;background:#fff;box-sizing:border-box;"></div><span id="t50" style="position:absolute;left:113.40px;transform-origin:0 50%;top:605.73px;font-size:4.2px;line-height:5.46px;font-weight:400;color:#555;white-space:nowrap;transform:scaleX(1.0000);">P</span><span id="t51" style="position:absolute;left:124.50px;transform-origin:0 50%;top:602.43px;font-size:9.9px;line-height:12.87px;font-weight:400;color:#141414;white-space:nowrap;transform:scaleX(0.8644);">SanDiego-Room-PDU-A</span><span id="t52" style="position:absolute;left:251.30px;transform-origin:0 50%;top:602.43px;font-size:9.9px;line-height:12.87px;font-weight:400;color:#141414;white-space:nowrap;transform:scaleX(0.8610);">Network Row/San Diego Data Cen...</span><span id="t53" style="position:absolute;left:397.20px;transform-origin:0 50%;top:602.43px;font-size:9.9px;line-height:12.87px;font-weight:400;color:#141414;white-space:nowrap;transform:scaleX(0.8348);">L1-L2-L3</span><span id="t54" style="position:absolute;right:226.00px;transform-origin:100% 50%;top:602.43px;font-size:9.9px;line-height:12.87px;font-weight:400;color:#141414;white-space:nowrap;transform:scaleX(0.8164);">28.785 kW</span><span id="t55" style="position:absolute;right:153.00px;transform-origin:100% 50%;top:602.43px;font-size:9.9px;line-height:12.87px;font-weight:400;color:#141414;white-space:nowrap;transform:scaleX(0.8197);">137.491 kW</span><span id="t56" style="position:absolute;right:80.00px;transform-origin:100% 50%;top:602.43px;font-size:9.9px;line-height:12.87px;font-weight:400;color:#141414;white-space:nowrap;transform:scaleX(0.8197);">166.277 kW</span><div style="position:absolute;left:64.00px;top:614.32px;width:1076.00px;height:1.00px;background:#f0f0f0;"></div><svg style="position:absolute;left:110.25px;top:619.18px" width="7" height="5" viewBox="0 0 7 5"><path d="M0.8 0.8 L3.5 3.8 L6.2 0.8" fill="none" stroke="#3a3a3a" stroke-width="1.1"/></svg><div style="position:absolute;left:123.25px;top:615.98px;width:10.80px;height:10.80px;border:1.6px solid #58b83c;background:#fff;box-sizing:border-box;"></div><span id="t57" style="position:absolute;left:127.15px;transform-origin:0 50%;top:618.85px;font-size:4.2px;line-height:5.46px;font-weight:400;color:#555;white-space:nowrap;transform:scaleX(1.0000);">P</span><span id="t58" style="position:absolute;left:138.25px;transform-origin:0 50%;top:615.55px;font-size:9.9px;line-height:12.87px;font-weight:400;color:#141414;white-space:nowrap;transform:scaleX(0.8188);">RPDU-A</span><span id="t59" style="position:absolute;left:251.30px;transform-origin:0 50%;top:615.55px;font-size:9.9px;line-height:12.87px;font-weight:400;color:#141414;white-space:nowrap;transform:scaleX(0.8870);">Right-rear/Net-Rack-4/Network R...</span><span id="t60" style="position:absolute;left:397.20px;transform-origin:0 50%;top:615.55px;font-size:9.9px;line-height:12.87px;font-weight:400;color:#141414;white-space:nowrap;transform:scaleX(0.8348);">L1-L2-L3</span><span id="t61" style="position:absolute;right:226.00px;transform-origin:100% 50%;top:615.55px;font-size:9.9px;line-height:12.87px;font-weight:400;color:#141414;white-space:nowrap;transform:scaleX(0.8126);">2.221 kW</span><span id="t62" style="position:absolute;right:153.00px;transform-origin:100% 50%;top:615.55px;font-size:9.9px;line-height:12.87px;font-weight:400;color:#141414;white-space:nowrap;transform:scaleX(0.8164);">15.072 kW</span><span id="t63" style="position:absolute;right:80.00px;transform-origin:100% 50%;top:615.55px;font-size:9.9px;line-height:12.87px;font-weight:400;color:#141414;white-space:nowrap;transform:scaleX(0.8164);">17.293 kW</span><div style="position:absolute;left:64.00px;top:627.44px;width:1076.00px;height:1.00px;background:#f0f0f0;"></div><svg style="position:absolute;left:124.00px;top:632.30px" width="7" height="5" viewBox="0 0 7 5"><path d="M0.8 0.8 L3.5 3.8 L6.2 0.8" fill="none" stroke="#3a3a3a" stroke-width="1.1"/></svg><div style="position:absolute;left:137.00px;top:629.10px;width:10.80px;height:10.80px;border:1.6px solid #3cb060;background:#fff;box-sizing:border-box;"></div><span id="t64" style="position:absolute;left:140.90px;transform-origin:0 50%;top:631.97px;font-size:4.2px;line-height:5.46px;font-weight:400;color:#555;white-space:nowrap;transform:scaleX(1.0000);">B</span><span id="t65" style="position:absolute;left:152.00px;transform-origin:0 50%;top:628.67px;font-size:9.9px;line-height:12.87px;font-weight:400;color:#141414;white-space:nowrap;transform:scaleX(0.7805);">Bank 1</span><span id="t66" style="position:absolute;left:251.30px;transform-origin:0 50%;top:628.67px;font-size:9.9px;line-height:12.87px;font-weight:400;color:#141414;white-space:nowrap;transform:scaleX(0.8886);">RPDU-A/Right-rear/Net-Rack-4/N...</span><span id="t67" style="position:absolute;left:397.20px;transform-origin:0 50%;top:628.67px;font-size:9.9px;line-height:12.87px;font-weight:400;color:#141414;white-space:nowrap;transform:scaleX(0.8153);">L1-L2</span><span id="t68" style="position:absolute;right:226.00px;transform-origin:100% 50%;top:628.67px;font-size:9.9px;line-height:12.87px;font-weight:400;color:#141414;white-space:nowrap;transform:scaleX(0.8126);">0.375 kW</span><span id="t69" style="position:absolute;right:153.00px;transform-origin:100% 50%;top:628.67px;font-size:9.9px;line-height:12.87px;font-weight:400;color:#141414;white-space:nowrap;transform:scaleX(0.8126);">7.612 kW</span><span id="t70" style="position:absolute;right:80.00px;transform-origin:100% 50%;top:628.67px;font-size:9.9px;line-height:12.87px;font-weight:400;color:#141414;white-space:nowrap;transform:scaleX(0.8126);">7.987 kW</span><div style="position:absolute;left:64.00px;top:640.56px;width:1076.00px;height:1.00px;background:#f0f0f0;"></div><div style="position:absolute;left:150.75px;top:642.22px;width:10.80px;height:10.80px;border:1.6px solid #8a8a8a;background:#fff;box-sizing:border-box;"></div><span id="t71" style="position:absolute;left:154.65px;transform-origin:0 50%;top:645.09px;font-size:4.2px;line-height:5.46px;font-weight:400;color:#555;white-space:nowrap;transform:scaleX(1.0000);">E</span><span id="t72" style="position:absolute;left:165.75px;transform-origin:0 50%;top:641.79px;font-size:9.9px;line-height:12.87px;font-weight:400;color:#141414;white-space:nowrap;transform:scaleX(0.8203);">PowerEdge R610</span><span id="t73" style="position:absolute;left:251.30px;transform-origin:0 50%;top:641.79px;font-size:9.9px;line-height:12.87px;font-weight:400;color:#141414;white-space:nowrap;transform:scaleX(0.8796);">U-26/Net-Rack-4/Network Row/Sa...</span><span id="t74" style="position:absolute;left:397.20px;transform-origin:0 50%;top:641.79px;font-size:9.9px;line-height:12.87px;font-weight:400;color:#141414;white-space:nowrap;transform:scaleX(0.8153);">L1-L2</span><span id="t75" style="position:absolute;left:470.40px;transform-origin:0 50%;top:641.79px;font-size:9.9px;line-height:12.87px;font-weight:400;color:#141414;white-space:nowrap;transform:scaleX(0.8383);">Outlet 1</span><div style="position:absolute;left:64.00px;top:653.68px;width:1076.00px;height:1.00px;background:#f0f0f0;"></div><div style="position:absolute;left:137.00px;top:655.34px;width:10.80px;height:10.80px;border:1.6px solid #3cb060;background:#fff;box-sizing:border-box;"></div><span id="t76" style="position:absolute;left:140.90px;transform-origin:0 50%;top:658.21px;font-size:4.2px;line-height:5.46px;font-weight:400;color:#555;white-space:nowrap;transform:scaleX(1.0000);">B</span><span id="t77" style="position:absolute;left:152.00px;transform-origin:0 50%;top:654.91px;font-size:9.9px;line-height:12.87px;font-weight:400;color:#141414;white-space:nowrap;transform:scaleX(0.7805);">Bank 2</span><span id="t78" style="position:absolute;left:251.30px;transform-origin:0 50%;top:654.91px;font-size:9.9px;line-height:12.87px;font-weight:400;color:#141414;white-space:nowrap;transform:scaleX(0.8886);">RPDU-A/Right-rear/Net-Rack-4/N...</span><span id="t79" style="position:absolute;left:397.20px;transform-origin:0 50%;top:654.91px;font-size:9.9px;line-height:12.87px;font-weight:400;color:#141414;white-space:nowrap;transform:scaleX(0.8153);">L1-L2</span><span id="t80" style="position:absolute;right:226.00px;transform-origin:100% 50%;top:654.91px;font-size:9.9px;line-height:12.87px;font-weight:400;color:#141414;white-space:nowrap;transform:scaleX(0.7933);">0 kW</span><span id="t81" style="position:absolute;right:153.00px;transform-origin:100% 50%;top:654.91px;font-size:9.9px;line-height:12.87px;font-weight:400;color:#141414;white-space:nowrap;transform:scaleX(0.8126);">7.987 kW</span><span id="t82" style="position:absolute;right:80.00px;transform-origin:100% 50%;top:654.91px;font-size:9.9px;line-height:12.87px;font-weight:400;color:#141414;white-space:nowrap;transform:scaleX(0.8126);">7.987 kW</span><div style="position:absolute;left:64.00px;top:666.80px;width:1076.00px;height:1.00px;background:#f0f0f0;"></div><svg style="position:absolute;left:125.50px;top:670.56px" width="5" height="7" viewBox="0 0 5 7"><path d="M0.8 0.8 L3.8 3.5 L0.8 6.2" fill="none" stroke="#9a9a9a" stroke-width="1"/></svg><div style="position:absolute;left:137.00px;top:668.46px;width:10.80px;height:10.80px;border:1.6px solid #3cb060;background:#fff;box-sizing:border-box;"></div><span id="t83" style="position:absolute;left:140.90px;transform-origin:0 50%;top:671.33px;font-size:4.2px;line-height:5.46px;font-weight:400;color:#555;white-space:nowrap;transform:scaleX(1.0000);">B</span><span id="t84" style="position:absolute;left:152.00px;transform-origin:0 50%;top:668.02px;font-size:9.9px;line-height:12.87px;font-weight:400;color:#141414;white-space:nowrap;transform:scaleX(0.7805);">Bank 3</span><span id="t85" style="position:absolute;left:251.30px;transform-origin:0 50%;top:668.02px;font-size:9.9px;line-height:12.87px;font-weight:400;color:#141414;white-space:nowrap;transform:scaleX(0.8886);">RPDU-A/Right-rear/Net-Rack-4/N...</span><span id="t86" style="position:absolute;left:397.20px;transform-origin:0 50%;top:668.02px;font-size:9.9px;line-height:12.87px;font-weight:400;color:#141414;white-space:nowrap;transform:scaleX(0.8153);">L2-L3</span><span id="t87" style="position:absolute;right:226.00px;transform-origin:100% 50%;top:668.02px;font-size:9.9px;line-height:12.87px;font-weight:400;color:#141414;white-space:nowrap;transform:scaleX(0.8126);">0.675 kW</span><span id="t88" style="position:absolute;right:153.00px;transform-origin:100% 50%;top:668.02px;font-size:9.9px;line-height:12.87px;font-weight:400;color:#141414;white-space:nowrap;transform:scaleX(0.8126);">7.312 kW</span><span id="t89" style="position:absolute;right:80.00px;transform-origin:100% 50%;top:668.02px;font-size:9.9px;line-height:12.87px;font-weight:400;color:#141414;white-space:nowrap;transform:scaleX(0.8126);">7.987 kW</span><div style="position:absolute;left:64.00px;top:679.92px;width:1076.00px;height:1.00px;background:#f0f0f0;"></div><svg style="position:absolute;left:125.50px;top:683.68px" width="5" height="7" viewBox="0 0 5 7"><path d="M0.8 0.8 L3.8 3.5 L0.8 6.2" fill="none" stroke="#9a9a9a" stroke-width="1"/></svg><div style="position:absolute;left:137.00px;top:681.58px;width:10.80px;height:10.80px;border:1.6px solid #3cb060;background:#fff;box-sizing:border-box;"></div><span id="t90" style="position:absolute;left:140.90px;transform-origin:0 50%;top:684.45px;font-size:4.2px;line-height:5.46px;font-weight:400;color:#555;white-space:nowrap;transform:scaleX(1.0000);">B</span><span id="t91" style="position:absolute;left:152.00px;transform-origin:0 50%;top:681.15px;font-size:9.9px;line-height:12.87px;font-weight:400;color:#141414;white-space:nowrap;transform:scaleX(0.7805);">Bank 4</span><span id="t92" style="position:absolute;left:251.30px;transform-origin:0 50%;top:681.15px;font-size:9.9px;line-height:12.87px;font-weight:400;color:#141414;white-space:nowrap;transform:scaleX(0.8886);">RPDU-A/Right-rear/Net-Rack-4/N...</span><span id="t93" style="position:absolute;left:397.20px;transform-origin:0 50%;top:681.15px;font-size:9.9px;line-height:12.87px;font-weight:400;color:#141414;white-space:nowrap;transform:scaleX(0.8153);">L2-L3</span><span id="t94" style="position:absolute;right:226.00px;transform-origin:100% 50%;top:681.15px;font-size:9.9px;line-height:12.87px;font-weight:400;color:#141414;white-space:nowrap;transform:scaleX(0.8004);">0.8 kW</span><span id="t95" style="position:absolute;right:153.00px;transform-origin:100% 50%;top:681.15px;font-size:9.9px;line-height:12.87px;font-weight:400;color:#141414;white-space:nowrap;transform:scaleX(0.8126);">7.187 kW</span><span id="t96" style="position:absolute;right:80.00px;transform-origin:100% 50%;top:681.15px;font-size:9.9px;line-height:12.87px;font-weight:400;color:#141414;white-space:nowrap;transform:scaleX(0.8126);">7.987 kW</span><div style="position:absolute;left:64.00px;top:693.04px;width:1076.00px;height:1.00px;background:#f0f0f0;"></div><div style="position:absolute;left:137.00px;top:694.70px;width:10.80px;height:10.80px;border:1.6px solid #3cb060;background:#fff;box-sizing:border-box;"></div><span id="t97" style="position:absolute;left:140.90px;transform-origin:0 50%;top:697.57px;font-size:4.2px;line-height:5.46px;font-weight:400;color:#555;white-space:nowrap;transform:scaleX(1.0000);">B</span><span id="t98" style="position:absolute;left:152.00px;transform-origin:0 50%;top:694.26px;font-size:9.9px;line-height:12.87px;font-weight:400;color:#141414;white-space:nowrap;transform:scaleX(0.7805);">Bank 5</span><span id="t99" style="position:absolute;left:251.30px;transform-origin:0 50%;top:694.26px;font-size:9.9px;line-height:12.87px;font-weight:400;color:#141414;white-space:nowrap;transform:scaleX(0.8886);">RPDU-A/Right-rear/Net-Rack-4/N...</span><span id="t100" style="position:absolute;left:397.20px;transform-origin:0 50%;top:694.26px;font-size:9.9px;line-height:12.87px;font-weight:400;color:#141414;white-space:nowrap;transform:scaleX(0.8153);">L3-L1</span><span id="t101" style="position:absolute;right:226.00px;transform-origin:100% 50%;top:694.26px;font-size:9.9px;line-height:12.87px;font-weight:400;color:#141414;white-space:nowrap;transform:scaleX(0.7933);">0 kW</span><span id="t102" style="position:absolute;right:153.00px;transform-origin:100% 50%;top:694.26px;font-size:9.9px;line-height:12.87px;font-weight:400;color:#141414;white-space:nowrap;transform:scaleX(0.8126);">7.987 kW</span><span id="t103" style="position:absolute;right:80.00px;transform-origin:100% 50%;top:694.26px;font-size:9.9px;line-height:12.87px;font-weight:400;color:#141414;white-space:nowrap;transform:scaleX(0.8126);">7.987 kW</span><div style="position:absolute;left:64.00px;top:706.16px;width:1076.00px;height:1.00px;background:#f0f0f0;"></div><svg style="position:absolute;left:125.50px;top:709.92px" width="5" height="7" viewBox="0 0 5 7"><path d="M0.8 0.8 L3.8 3.5 L0.8 6.2" fill="none" stroke="#9a9a9a" stroke-width="1"/></svg><div style="position:absolute;left:137.00px;top:707.82px;width:10.80px;height:10.80px;border:1.6px solid #3cb060;background:#fff;box-sizing:border-box;"></div><span id="t104" style="position:absolute;left:140.90px;transform-origin:0 50%;top:710.69px;font-size:4.2px;line-height:5.46px;font-weight:400;color:#555;white-space:nowrap;transform:scaleX(1.0000);">B</span><span id="t105" style="position:absolute;left:152.00px;transform-origin:0 50%;top:707.39px;font-size:9.9px;line-height:12.87px;font-weight:400;color:#141414;white-space:nowrap;transform:scaleX(0.7805);">Bank 6</span><span id="t106" style="position:absolute;left:251.30px;transform-origin:0 50%;top:707.39px;font-size:9.9px;line-height:12.87px;font-weight:400;color:#141414;white-space:nowrap;transform:scaleX(0.8886);">RPDU-A/Right-rear/Net-Rack-4/N...</span><span id="t107" style="position:absolute;left:397.20px;transform-origin:0 50%;top:707.39px;font-size:9.9px;line-height:12.87px;font-weight:400;color:#141414;white-space:nowrap;transform:scaleX(0.8153);">L3-L1</span><span id="t108" style="position:absolute;right:226.00px;transform-origin:100% 50%;top:707.39px;font-size:9.9px;line-height:12.87px;font-weight:400;color:#141414;white-space:nowrap;transform:scaleX(0.8004);">0.9 kW</span><span id="t109" style="position:absolute;right:153.00px;transform-origin:100% 50%;top:707.39px;font-size:9.9px;line-height:12.87px;font-weight:400;color:#141414;white-space:nowrap;transform:scaleX(0.8126);">7.087 kW</span><span id="t110" style="position:absolute;right:80.00px;transform-origin:100% 50%;top:707.39px;font-size:9.9px;line-height:12.87px;font-weight:400;color:#141414;white-space:nowrap;transform:scaleX(0.8126);">7.987 kW</span><div style="position:absolute;left:64.00px;top:719.28px;width:1076.00px;height:1.00px;background:#f0f0f0;"></div><svg style="position:absolute;left:111.75px;top:723.04px" width="5" height="7" viewBox="0 0 5 7"><path d="M0.8 0.8 L3.8 3.5 L0.8 6.2" fill="none" stroke="#9a9a9a" stroke-width="1"/></svg><div style="position:absolute;left:123.25px;top:720.94px;width:10.80px;height:10.80px;border:1.6px solid #58b83c;background:#fff;box-sizing:border-box;"></div><span id="t111" style="position:absolute;left:127.15px;transform-origin:0 50%;top:723.81px;font-size:4.2px;line-height:5.46px;font-weight:400;color:#555;white-space:nowrap;transform:scaleX(1.0000);">P</span><span id="t112" style="position:absolute;left:138.25px;transform-origin:0 50%;top:720.50px;font-size:9.9px;line-height:12.87px;font-weight:400;color:#141414;white-space:nowrap;transform:scaleX(0.8188);">RPDU-A</span><span id="t113" style="position:absolute;left:251.30px;transform-origin:0 50%;top:720.50px;font-size:9.9px;line-height:12.87px;font-weight:400;color:#141414;white-space:nowrap;transform:scaleX(0.8870);">Right-rear/Net-Rack-3/Network R...</span><span id="t114" style="position:absolute;left:397.20px;transform-origin:0 50%;top:720.50px;font-size:9.9px;line-height:12.87px;font-weight:400;color:#141414;white-space:nowrap;transform:scaleX(0.8348);">L1-L2-L3</span><span id="t115" style="position:absolute;right:226.00px;transform-origin:100% 50%;top:720.50px;font-size:9.9px;line-height:12.87px;font-weight:400;color:#141414;white-space:nowrap;transform:scaleX(0.8072);">2.22 kW</span><span id="t116" style="position:absolute;right:153.00px;transform-origin:100% 50%;top:720.50px;font-size:9.9px;line-height:12.87px;font-weight:400;color:#141414;white-space:nowrap;transform:scaleX(0.8164);">15.073 kW</span><span id="t117" style="position:absolute;right:80.00px;transform-origin:100% 50%;top:720.50px;font-size:9.9px;line-height:12.87px;font-weight:400;color:#141414;white-space:nowrap;transform:scaleX(0.8164);">17.293 kW</span><div style="position:absolute;left:64.00px;top:732.40px;width:1076.00px;height:1.00px;background:#f0f0f0;"></div><svg style="position:absolute;left:111.75px;top:736.16px" width="5" height="7" viewBox="0 0 5 7"><path d="M0.8 0.8 L3.8 3.5 L0.8 6.2" fill="none" stroke="#9a9a9a" stroke-width="1"/></svg><div style="position:absolute;left:123.25px;top:734.06px;width:10.80px;height:10.80px;border:1.6px solid #58b83c;background:#fff;box-sizing:border-box;"></div><span id="t118" style="position:absolute;left:127.15px;transform-origin:0 50%;top:736.93px;font-size:4.2px;line-height:5.46px;font-weight:400;color:#555;white-space:nowrap;transform:scaleX(1.0000);">P</span><span id="t119" style="position:absolute;left:138.25px;transform-origin:0 50%;top:733.62px;font-size:9.9px;line-height:12.87px;font-weight:400;color:#141414;white-space:nowrap;transform:scaleX(0.8188);">RPDU-A</span><span id="t120" style="position:absolute;left:251.30px;transform-origin:0 50%;top:733.62px;font-size:9.9px;line-height:12.87px;font-weight:400;color:#141414;white-space:nowrap;transform:scaleX(0.8870);">Right-rear/Net-Rack-1/Network R...</span><span id="t121" style="position:absolute;left:397.20px;transform-origin:0 50%;top:733.62px;font-size:9.9px;line-height:12.87px;font-weight:400;color:#141414;white-space:nowrap;transform:scaleX(0.8348);">L1-L2-L3</span><span id="t122" style="position:absolute;right:226.00px;transform-origin:100% 50%;top:733.62px;font-size:9.9px;line-height:12.87px;font-weight:400;color:#141414;white-space:nowrap;transform:scaleX(0.8126);">2.398 kW</span><span id="t123" style="position:absolute;right:153.00px;transform-origin:100% 50%;top:733.62px;font-size:9.9px;line-height:12.87px;font-weight:400;color:#141414;white-space:nowrap;transform:scaleX(0.8164);">14.895 kW</span><span id="t124" style="position:absolute;right:80.00px;transform-origin:100% 50%;top:733.62px;font-size:9.9px;line-height:12.87px;font-weight:400;color:#141414;white-space:nowrap;transform:scaleX(0.8164);">17.293 kW</span><div style="position:absolute;left:64.00px;top:745.52px;width:1076.00px;height:1.00px;background:#f0f0f0;"></div><svg style="position:absolute;left:111.75px;top:749.28px" width="5" height="7" viewBox="0 0 5 7"><path d="M0.8 0.8 L3.8 3.5 L0.8 6.2" fill="none" stroke="#9a9a9a" stroke-width="1"/></svg><div style="position:absolute;left:123.25px;top:747.18px;width:10.80px;height:10.80px;border:1.6px solid #58b83c;background:#fff;box-sizing:border-box;"></div><span id="t125" style="position:absolute;left:127.15px;transform-origin:0 50%;top:750.05px;font-size:4.2px;line-height:5.46px;font-weight:400;color:#555;white-space:nowrap;transform:scaleX(1.0000);">P</span><span id="t126" style="position:absolute;left:138.25px;transform-origin:0 50%;top:746.75px;font-size:9.9px;line-height:12.87px;font-weight:400;color:#141414;white-space:nowrap;transform:scaleX(0.8188);">RPDU-A</span><span id="t127" style="position:absolute;left:251.30px;transform-origin:0 50%;top:746.75px;font-size:9.9px;line-height:12.87px;font-weight:400;color:#141414;white-space:nowrap;transform:scaleX(0.8824);">Right-rear/IT-Rack-2/IT-Row-A/Sa...</span><span id="t128" style="position:absolute;left:397.20px;transform-origin:0 50%;top:746.75px;font-size:9.9px;line-height:12.87px;font-weight:400;color:#141414;white-space:nowrap;transform:scaleX(0.8348);">L1-L2-L3</span><span id="t129" style="position:absolute;right:226.00px;transform-origin:100% 50%;top:746.75px;font-size:9.9px;line-height:12.87px;font-weight:400;color:#141414;white-space:nowrap;transform:scaleX(0.8126);">2.671 kW</span><span id="t130" style="position:absolute;right:153.00px;transform-origin:100% 50%;top:746.75px;font-size:9.9px;line-height:12.87px;font-weight:400;color:#141414;white-space:nowrap;transform:scaleX(0.8126);">3.093 kW</span><span id="t131" style="position:absolute;right:80.00px;transform-origin:100% 50%;top:746.75px;font-size:9.9px;line-height:12.87px;font-weight:400;color:#141414;white-space:nowrap;transform:scaleX(0.8126);">5.764 kW</span><div style="position:absolute;left:64.00px;top:758.64px;width:1076.00px;height:1.00px;background:#f0f0f0;"></div><svg style="position:absolute;left:111.75px;top:762.40px" width="5" height="7" viewBox="0 0 5 7"><path d="M0.8 0.8 L3.8 3.5 L0.8 6.2" fill="none" stroke="#9a9a9a" stroke-width="1"/></svg><div style="position:absolute;left:123.25px;top:760.30px;width:10.80px;height:10.80px;border:1.6px solid #58b83c;background:#fff;box-sizing:border-box;"></div><span id="t132" style="position:absolute;left:127.15px;transform-origin:0 50%;top:763.17px;font-size:4.2px;line-height:5.46px;font-weight:400;color:#555;white-space:nowrap;transform:scaleX(1.0000);">P</span><span id="t133" style="position:absolute;left:138.25px;transform-origin:0 50%;top:759.87px;font-size:9.9px;line-height:12.87px;font-weight:400;color:#141414;white-space:nowrap;transform:scaleX(0.8188);">RPDU-A</span><span id="t134" style="position:absolute;left:251.30px;transform-origin:0 50%;top:759.87px;font-size:9.9px;line-height:12.87px;font-weight:400;color:#141414;white-space:nowrap;transform:scaleX(0.8824);">Right-rear/IT-Rack-4/IT-Row-A/Sa...</span><span id="t135" style="position:absolute;left:397.20px;transform-origin:0 50%;top:759.87px;font-size:9.9px;line-height:12.87px;font-weight:400;color:#141414;white-space:nowrap;transform:scaleX(0.8348);">L1-L2-L3</span><span id="t136" style="position:absolute;right:226.00px;transform-origin:100% 50%;top:759.87px;font-size:9.9px;line-height:12.87px;font-weight:400;color:#141414;white-space:nowrap;transform:scaleX(0.8126);">2.125 kW</span><span id="t137" style="position:absolute;right:153.00px;transform-origin:100% 50%;top:759.87px;font-size:9.9px;line-height:12.87px;font-weight:400;color:#141414;white-space:nowrap;transform:scaleX(0.8126);">3.639 kW</span><span id="t138" style="position:absolute;right:80.00px;transform-origin:100% 50%;top:759.87px;font-size:9.9px;line-height:12.87px;font-weight:400;color:#141414;white-space:nowrap;transform:scaleX(0.8126);">5.764 kW</span></div><div style="position:absolute;left:64.00px;top:767.60px;width:1076.00px;height:12.80px;background:#f0f0f0;"></div><div style="position:absolute;left:77.50px;top:767.60px;width:981.50px;height:10.80px;background:#cdcdcd;"></div><svg style="position:absolute;left:67.4px;top:770.4px" width="5" height="7" viewBox="0 0 5 7"><path d="M4 0.8 L1 3.5 L4 6.2" fill="none" stroke="#333" stroke-width="1.2"/></svg><div style="position:absolute;left:61.00px;top:780.40px;width:1079.00px;height:2.60px;background:#b4c3d9;"></div><div style="position:absolute;left:61.00px;top:783.00px;width:1079.00px;height:8.40px;background:#f3f3f3;"></div><div style="position:absolute;left:0;top:0;width:1140px;height:791.4px;overflow:hidden"><svg style="position:absolute;left:836px;top:786.2px" width="11" height="11" viewBox="0 0 11 11"><circle cx="5.5" cy="5.5" r="4.6" fill="#fff" stroke="#d02030" stroke-width="1.6"/></svg><span id="t139" style="position:absolute;left:852.00px;transform-origin:0 50%;top:786.77px;font-size:9.9px;line-height:12.87px;font-weight:400;color:#141414;white-space:nowrap;transform:scaleX(0.9500);">999</span><svg style="position:absolute;left:874px;top:786.4px" width="9" height="10" viewBox="0 0 9 10"><path d="M4.5 0.6 C2 0.6 1.6 3 1.6 5 L0.6 8 H8.4 L7.4 5 C7.4 3 7 0.6 4.5 0.6Z" fill="#e8c468" stroke="#b89030" stroke-width="0.5"/></svg><span id="t140" style="position:absolute;left:889.00px;transform-origin:0 50%;top:786.77px;font-size:9.9px;line-height:12.87px;font-weight:400;color:#141414;white-space:nowrap;transform:scaleX(0.9500);">171</span><span id="t141" style="position:absolute;left:911.00px;transform-origin:0 50%;top:786.77px;font-size:9.9px;line-height:12.87px;font-weight:400;color:#141414;white-space:nowrap;transform:scaleX(0.9500);">Dimension 3</span><svg style="position:absolute;left:983px;top:785.8px" width="9" height="10" viewBox="0 0 9 10"><circle cx="4.5" cy="3" r="2.6" fill="#8a5a30"/><path d="M0.6 10 C0.6 6 8.4 6 8.4 10Z" fill="#8a5a30"/></svg><span id="t142" style="position:absolute;left:998.00px;transform-origin:0 50%;top:786.77px;font-size:9.9px;line-height:12.87px;font-weight:400;color:#141414;white-space:nowrap;transform:scaleX(0.9500);">ITLabAdmin</span><span id="t143" style="position:absolute;left:1071.00px;transform-origin:0 50%;top:786.77px;font-size:9.9px;line-height:12.87px;font-weight:400;color:#141414;white-space:nowrap;transform:scaleX(0.9500);">User</span><svg style="position:absolute;left:1096px;top:786.4px" width="10" height="10" viewBox="0 0 10 10"><rect x="1" y="0.6" width="8" height="6" fill="#dfe4ea" stroke="#8a929c" stroke-width="0.7"/></svg><span id="t144" style="position:absolute;left:1110.00px;transform-origin:0 50%;top:786.77px;font-size:9.9px;line-height:12.87px;font-weight:400;color:#141414;white-space:nowrap;transform:scaleX(0.9500);">10.169.3</span></div><div style="position:absolute;left:543.20px;top:391.80px;width:317.60px;height:391.00px;background:#747474;"></div><div style="position:absolute;left:541.60px;top:390.20px;width:317.60px;height:390.60px;background:#ffffe1;border:1px solid #8c8c7c;box-sizing:border-box;"></div><span id="t145" style="position:absolute;left:544.00px;transform-origin:0 50%;top:391.49px;font-size:9.4px;line-height:12.22px;font-weight:700;color:#111;white-space:nowrap;transform:scaleX(0.8937);">SanDiego-Room-PDU-C</span><div style="position:absolute;left:542.60px;top:404.60px;width:315.60px;height:1.00px;background:#b4b4a4;"></div><span id="t146" style="position:absolute;left:548.00px;transform-origin:0 50%;top:407.49px;font-size:9.4px;line-height:12.22px;font-weight:700;color:#111;white-space:nowrap;transform:scaleX(0.9163);">General</span><span id="t147" style="position:absolute;left:553.30px;transform-origin:0 50%;top:419.69px;font-size:9.4px;line-height:12.22px;font-weight:400;color:#222;white-space:nowrap;transform:scaleX(0.8937);">Type:</span><span id="t148" style="position:absolute;left:609.30px;transform-origin:0 50%;top:419.69px;font-size:9.4px;line-height:12.22px;font-weight:400;color:#222;white-space:nowrap;transform:scaleX(0.7577);">PDU</span><span id="t149" style="position:absolute;left:553.30px;transform-origin:0 50%;top:431.29px;font-size:9.4px;line-height:12.22px;font-weight:400;color:#222;white-space:nowrap;transform:scaleX(0.8539);">Location:</span><span id="t150" style="position:absolute;left:609.30px;transform-origin:0 50%;top:431.29px;font-size:9.4px;line-height:12.22px;font-weight:400;color:#222;white-space:nowrap;transform:scaleX(0.8353);">HD-A/San Diego Data Center/San Diego/North America/</span><span id="t151" style="position:absolute;left:553.30px;transform-origin:0 50%;top:442.99px;font-size:9.4px;line-height:12.22px;font-weight:400;color:#222;white-space:nowrap;transform:scaleX(0.8156);">Serial Number:</span><span id="t152" style="position:absolute;left:609.30px;transform-origin:0 50%;top:442.99px;font-size:9.4px;line-height:12.22px;font-weight:400;color:#222;white-space:nowrap;transform:scaleX(0.9700);">-</span><span id="t153" style="position:absolute;left:553.30px;transform-origin:0 50%;top:454.69px;font-size:9.4px;line-height:12.22px;font-weight:400;color:#222;white-space:nowrap;transform:scaleX(0.8393);">Barcode:</span><span id="t154" style="position:absolute;left:609.30px;transform-origin:0 50%;top:454.69px;font-size:9.4px;line-height:12.22px;font-weight:400;color:#222;white-space:nowrap;transform:scaleX(0.9700);">-</span><div style="position:absolute;left:542.60px;top:472.60px;width:315.60px;height:1.00px;background:#b4b4a4;"></div><span id="t155" style="position:absolute;left:548.00px;transform-origin:0 50%;top:475.49px;font-size:9.4px;line-height:12.22px;font-weight:700;color:#111;white-space:nowrap;transform:scaleX(0.9017);">Power Dependency</span><span id="t156" style="position:absolute;left:553.30px;transform-origin:0 50%;top:487.09px;font-size:9.4px;line-height:12.22px;font-weight:400;color:#222;white-space:nowrap;transform:scaleX(0.8033);">San Diego UPS Room/SanDiego-PDU-B/Panel-A/ Position:</span><span id="t157" style="position:absolute;left:756.60px;transform-origin:0 50%;top:487.09px;font-size:9.4px;line-height:12.22px;font-weight:400;color:#222;white-space:nowrap;transform:scaleX(0.8149);">1, 250A 3P Generic Breaker</span><span id="t158" style="position:absolute;left:553.30px;transform-origin:0 50%;top:499.29px;font-size:9.4px;line-height:12.22px;font-weight:400;color:#222;white-space:nowrap;transform:scaleX(0.8086);">Phase:</span><span id="t159" style="position:absolute;left:710.00px;transform-origin:0 50%;top:499.29px;font-size:9.4px;line-height:12.22px;font-weight:400;color:#222;white-space:nowrap;transform:scaleX(0.7993);">L1-L2-L3</span><span id="t160" style="position:absolute;left:553.30px;transform-origin:0 50%;top:510.49px;font-size:9.4px;line-height:12.22px;font-weight:400;color:#222;white-space:nowrap;transform:scaleX(0.8228);">Power Source:</span><span id="t161" style="position:absolute;left:710.00px;transform-origin:0 50%;top:510.49px;font-size:9.4px;line-height:12.22px;font-weight:400;color:#222;white-space:nowrap;transform:scaleX(0.8307);">SanDiego-UPS-B</span><span id="t162" style="position:absolute;left:553.30px;transform-origin:0 50%;top:522.09px;font-size:9.4px;line-height:12.22px;font-weight:400;color:#222;white-space:nowrap;transform:scaleX(0.8237);">Power Source Location:</span><span id="t163" style="position:absolute;left:710.00px;transform-origin:0 50%;top:522.09px;font-size:9.4px;line-height:12.22px;font-weight:400;color:#222;white-space:nowrap;transform:scaleX(0.7826);">San Diego UPS Room</span><div style="position:absolute;left:542.60px;top:540.20px;width:315.60px;height:1.00px;background:#b4b4a4;"></div><span id="t164" style="position:absolute;left:548.00px;transform-origin:0 50%;top:543.49px;font-size:9.4px;line-height:12.22px;font-weight:700;color:#111;white-space:nowrap;transform:scaleX(0.9419);">Capacity (kW)</span><div style="position:absolute;left:558.30px;top:572.00px;width:15.40px;height:68.80px;background:#fff;border:1px solid #808080;box-sizing:border-box;"></div><div style="position:absolute;left:559.30px;top:626.80px;width:6.20px;height:13.00px;background:#c4c4c4;"></div><div style="position:absolute;left:559.30px;top:620.60px;width:6.20px;height:6.20px;background:#6e6e6e;"></div><div style="position:absolute;left:566.10px;top:626.20px;width:6.40px;height:13.60px;background:#1ea83c;"></div><div style="position:absolute;left:584.00px;top:572.00px;width:15.40px;height:68.80px;background:#fff;border:1px solid #808080;box-sizing:border-box;"></div><div style="position:absolute;left:585.00px;top:625.60px;width:6.20px;height:14.20px;background:#c4c4c4;"></div><div style="position:absolute;left:585.00px;top:619.60px;width:6.20px;height:6.00px;background:#6e6e6e;"></div><div style="position:absolute;left:591.80px;top:625.00px;width:6.40px;height:14.80px;background:#1ea83c;"></div><div style="position:absolute;left:609.40px;top:572.00px;width:15.40px;height:68.80px;background:#fff;border:1px solid #808080;box-sizing:border-box;"></div><div style="position:absolute;left:610.40px;top:626.20px;width:6.20px;height:13.60px;background:#c4c4c4;"></div><div style="position:absolute;left:610.40px;top:620.40px;width:6.20px;height:5.80px;background:#6e6e6e;"></div><div style="position:absolute;left:617.20px;top:625.60px;width:6.40px;height:14.20px;background:#1ea83c;"></div><span id="t165" style="position:absolute;left:566.10px;transform-origin:0 50%;top:564.11px;font-size:6.6px;line-height:8.58px;font-weight:400;color:#222;white-space:nowrap;transform:scaleX(0.9800);text-decoration:underline;margin-left:-8.2px;">55.43</span><span id="t166" style="position:absolute;left:562.90px;transform-origin:0 50%;top:641.44px;font-size:6.4px;line-height:8.32px;font-weight:400;color:#222;white-space:nowrap;transform:scaleX(1.0000);">L1</span><span id="t167" style="position:absolute;left:591.80px;transform-origin:0 50%;top:564.11px;font-size:6.6px;line-height:8.58px;font-weight:400;color:#222;white-space:nowrap;transform:scaleX(0.9800);text-decoration:underline;margin-left:-8.2px;">55.43</span><span id="t168" style="position:absolute;left:588.60px;transform-origin:0 50%;top:641.44px;font-size:6.4px;line-height:8.32px;font-weight:400;color:#222;white-space:nowrap;transform:scaleX(1.0000);">L2</span><span id="t169" style="position:absolute;left:617.20px;transform-origin:0 50%;top:564.11px;font-size:6.6px;line-height:8.58px;font-weight:400;color:#222;white-space:nowrap;transform:scaleX(0.9800);text-decoration:underline;margin-left:-8.2px;">55.43</span><span id="t170" style="position:absolute;left:614.00px;transform-origin:0 50%;top:641.44px;font-size:6.4px;line-height:8.32px;font-weight:400;color:#222;white-space:nowrap;transform:scaleX(1.0000);">L3</span><div style="position:absolute;left:643.00px;top:569.00px;width:9.20px;height:9.20px;background:#c4c4c4;border:1px solid #555;box-sizing:border-box;"></div><span id="t171" style="position:absolute;left:655.40px;transform-origin:0 50%;top:567.49px;font-size:9.4px;line-height:12.22px;font-weight:400;color:#222;white-space:nowrap;transform:scaleX(0.8365);">Estimated Load</span><div style="position:absolute;left:643.00px;top:579.80px;width:9.20px;height:9.20px;background:#6e6e6e;border:1px solid #555;box-sizing:border-box;"></div><span id="t172" style="position:absolute;left:655.40px;transform-origin:0 50%;top:578.29px;font-size:9.4px;line-height:12.22px;font-weight:400;color:#222;white-space:nowrap;transform:scaleX(0.8341);">Potential Failover Load</span><div style="position:absolute;left:643.00px;top:590.80px;width:9.20px;height:9.20px;background:#1ea83c;border:1px solid #555;box-sizing:border-box;"></div><span id="t173" style="position:absolute;left:655.40px;transform-origin:0 50%;top:589.29px;font-size:9.4px;line-height:12.22px;font-weight:400;color:#222;white-space:nowrap;transform:scaleX(0.8119);">Measured Peak Power</span><span id="t174" style="position:absolute;left:548.00px;transform-origin:0 50%;top:658.09px;font-size:9.4px;line-height:12.22px;font-weight:700;color:#111;white-space:nowrap;transform:scaleX(0.9442);">Totals (kW):</span><span id="t175" style="position:absolute;right:531.40px;transform-origin:100% 50%;top:670.89px;font-size:9.4px;line-height:12.22px;font-weight:400;color:#222;white-space:nowrap;transform:scaleX(0.9000);">L1</span><span id="t176" style="position:absolute;right:498.60px;transform-origin:100% 50%;top:670.89px;font-size:9.4px;line-height:12.22px;font-weight:400;color:#222;white-space:nowrap;transform:scaleX(0.9000);">L2</span><span id="t177" style="position:absolute;right:465.80px;transform-origin:100% 50%;top:670.89px;font-size:9.4px;line-height:12.22px;font-weight:400;color:#222;white-space:nowrap;transform:scaleX(0.9000);">L3</span><span id="t178" style="position:absolute;right:429.00px;transform-origin:100% 50%;top:670.89px;font-size:9.4px;line-height:12.22px;font-weight:400;color:#222;white-space:nowrap;transform:scaleX(0.9000);">Totals:</span><span id="t179" style="position:absolute;left:553.30px;transform-origin:0 50%;top:682.69px;font-size:9.4px;line-height:12.22px;font-weight:400;color:#222;white-space:nowrap;transform:scaleX(0.8266);">Remaining Capacity:</span><span id="t180" style="position:absolute;right:531.40px;transform-origin:100% 50%;top:682.69px;font-size:9.4px;line-height:12.22px;font-weight:400;color:#222;white-space:nowrap;transform:scaleX(0.9000);">39.62</span><span id="t181" style="position:absolute;right:498.60px;transform-origin:100% 50%;top:682.69px;font-size:9.4px;line-height:12.22px;font-weight:400;color:#222;white-space:nowrap;transform:scaleX(0.9000);">38.45</span><span id="t182" style="position:absolute;right:465.80px;transform-origin:100% 50%;top:682.69px;font-size:9.4px;line-height:12.22px;font-weight:400;color:#222;white-space:nowrap;transform:scaleX(0.9000);">39.09</span><span id="t183" style="position:absolute;right:429.00px;transform-origin:100% 50%;top:682.69px;font-size:9.4px;line-height:12.22px;font-weight:400;color:#222;white-space:nowrap;transform:scaleX(0.9000);">117.15</span><span id="t184" style="position:absolute;left:553.30px;transform-origin:0 50%;top:694.29px;font-size:9.4px;line-height:12.22px;font-weight:400;color:#222;white-space:nowrap;transform:scaleX(0.8207);">Estimated Load:</span><span id="t185" style="position:absolute;right:531.40px;transform-origin:100% 50%;top:694.29px;font-size:9.4px;line-height:12.22px;font-weight:400;color:#222;white-space:nowrap;transform:scaleX(0.9000);">11.31</span><span id="t186" style="position:absolute;right:498.60px;transform-origin:100% 50%;top:694.29px;font-size:9.4px;line-height:12.22px;font-weight:400;color:#222;white-space:nowrap;transform:scaleX(0.9000);">12.39</span><span id="t187" style="position:absolute;right:465.80px;transform-origin:100% 50%;top:694.29px;font-size:9.4px;line-height:12.22px;font-weight:400;color:#222;white-space:nowrap;transform:scaleX(0.9000);">11.91</span><span id="t188" style="position:absolute;right:429.00px;transform-origin:100% 50%;top:694.29px;font-size:9.4px;line-height:12.22px;font-weight:400;color:#222;white-space:nowrap;transform:scaleX(0.9000);">35.61</span><span id="t189" style="position:absolute;left:553.30px;transform-origin:0 50%;top:705.89px;font-size:9.4px;line-height:12.22px;font-weight:400;color:#222;white-space:nowrap;transform:scaleX(0.8325);">Potential Failover Load:</span><span id="t190" style="position:absolute;right:531.40px;transform-origin:100% 50%;top:705.89px;font-size:9.4px;line-height:12.22px;font-weight:400;color:#222;white-space:nowrap;transform:scaleX(0.9000);">4.49</span><span id="t191" style="position:absolute;right:498.60px;transform-origin:100% 50%;top:705.89px;font-size:9.4px;line-height:12.22px;font-weight:400;color:#222;white-space:nowrap;transform:scaleX(0.9000);">4.59</span><span id="t192" style="position:absolute;right:465.80px;transform-origin:100% 50%;top:705.89px;font-size:9.4px;line-height:12.22px;font-weight:400;color:#222;white-space:nowrap;transform:scaleX(0.9000);">4.43</span><span id="t193" style="position:absolute;right:429.00px;transform-origin:100% 50%;top:705.89px;font-size:9.4px;line-height:12.22px;font-weight:400;color:#222;white-space:nowrap;transform:scaleX(0.9000);">13.51</span><span id="t194" style="position:absolute;left:553.30px;transform-origin:0 50%;top:717.69px;font-size:9.4px;line-height:12.22px;font-weight:400;color:#222;white-space:nowrap;transform:scaleX(0.8143);">Power Limit:</span><span id="t195" style="position:absolute;right:531.40px;transform-origin:100% 50%;top:717.69px;font-size:9.4px;line-height:12.22px;font-weight:400;color:#222;white-space:nowrap;transform:scaleX(0.9000);">55.43</span><span id="t196" style="position:absolute;right:498.60px;transform-origin:100% 50%;top:717.69px;font-size:9.4px;line-height:12.22px;font-weight:400;color:#222;white-space:nowrap;transform:scaleX(0.9000);">55.43</span><span id="t197" style="position:absolute;right:465.80px;transform-origin:100% 50%;top:717.69px;font-size:9.4px;line-height:12.22px;font-weight:400;color:#222;white-space:nowrap;transform:scaleX(0.9000);">55.43</span><span id="t198" style="position:absolute;right:429.00px;transform-origin:100% 50%;top:717.69px;font-size:9.4px;line-height:12.22px;font-weight:400;color:#222;white-space:nowrap;transform:scaleX(0.9000);">166.28</span><div style="position:absolute;left:542.60px;top:733.00px;width:315.60px;height:1.00px;background:#b4b4a4;"></div><span id="t199" style="position:absolute;left:548.00px;transform-origin:0 50%;top:736.49px;font-size:9.4px;line-height:12.22px;font-weight:700;color:#111;white-space:nowrap;transform:scaleX(0.9309);">Measured Data:</span><span id="t200" style="position:absolute;right:551.20px;transform-origin:100% 50%;top:749.49px;font-size:9.4px;line-height:12.22px;font-weight:400;color:#222;white-space:nowrap;transform:scaleX(0.9000);">L1</span><span id="t201" style="position:absolute;right:518.40px;transform-origin:100% 50%;top:749.49px;font-size:9.4px;line-height:12.22px;font-weight:400;color:#222;white-space:nowrap;transform:scaleX(0.9000);">L2</span><span id="t202" style="position:absolute;right:485.40px;transform-origin:100% 50%;top:749.49px;font-size:9.4px;line-height:12.22px;font-weight:400;color:#222;white-space:nowrap;transform:scaleX(0.9000);">L3</span><span id="t203" style="position:absolute;right:449.20px;transform-origin:100% 50%;top:749.49px;font-size:9.4px;line-height:12.22px;font-weight:400;color:#222;white-space:nowrap;transform:scaleX(0.9000);">Totals:</span><span id="t204" style="position:absolute;left:553.30px;transform-origin:0 50%;top:761.29px;font-size:9.4px;line-height:12.22px;font-weight:400;color:#222;white-space:nowrap;transform:scaleX(0.8286);">Peak Power (kW):</span><span id="t205" style="position:absolute;right:551.20px;transform-origin:100% 50%;top:761.29px;font-size:9.4px;line-height:12.22px;font-weight:400;color:#222;white-space:nowrap;transform:scaleX(0.9000);">11.31</span><span id="t206" style="position:absolute;right:518.40px;transform-origin:100% 50%;top:761.29px;font-size:9.4px;line-height:12.22px;font-weight:400;color:#222;white-space:nowrap;transform:scaleX(0.9000);">12.39</span><span id="t207" style="position:absolute;right:485.40px;transform-origin:100% 50%;top:761.29px;font-size:9.4px;line-height:12.22px;font-weight:400;color:#222;white-space:nowrap;transform:scaleX(0.9000);">11.91</span><span id="t208" style="position:absolute;right:449.20px;transform-origin:100% 50%;top:761.29px;font-size:9.4px;line-height:12.22px;font-weight:400;color:#222;white-space:nowrap;transform:scaleX(0.9000);">35.61</span></div></body></html>
